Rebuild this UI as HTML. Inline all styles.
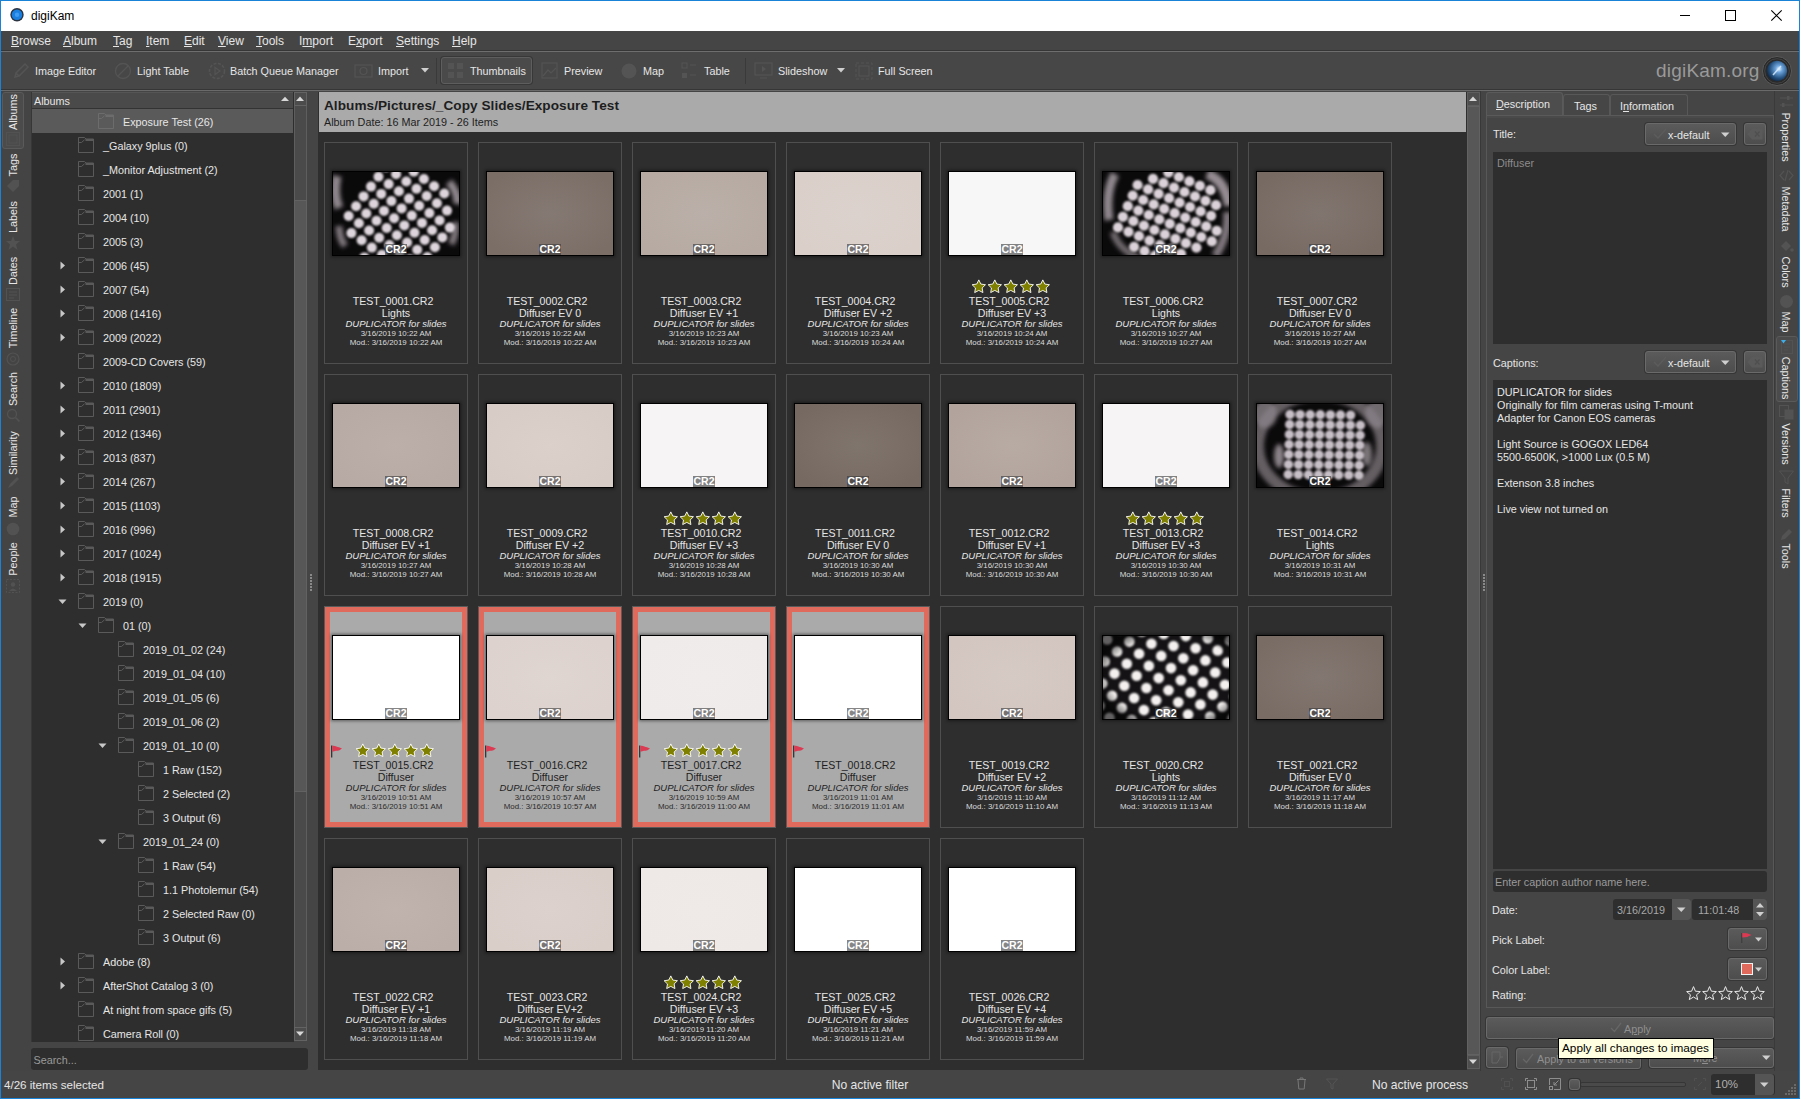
<!DOCTYPE html><html><head><meta charset="utf-8"><style>
html,body{margin:0;padding:0;}
body{width:1800px;height:1099px;overflow:hidden;position:relative;background:#454545;font-family:"Liberation Sans",sans-serif;}
div{position:absolute;box-sizing:border-box;}
.t{white-space:pre;}
.u{text-decoration:underline;text-underline-offset:1px;}
svg{position:absolute;overflow:visible;}
</style></head><body>
<div style="left:0px;top:0px;width:1800px;height:31px;background:#ffffff;"></div>
<svg style="left:9px;top:6px" width="18" height="18"><circle cx="8" cy="8.7" r="6.7" fill="#2a3340"/><circle cx="8" cy="8.7" r="5.3" fill="#1b7fe0"/><circle cx="8" cy="8.7" r="2.2" fill="#3f9cf2"/></svg>
<div class="t" style="left:31px;top:8px;font-size:12px;line-height:16px;color:#000000;font-weight:400;font-style:normal;">digiKam</div>
<div style="left:1680px;top:15px;width:10px;height:1px;background:#000;"></div>
<div style="left:1725px;top:10px;width:11px;height:11px;border:1px solid #000;"></div>
<svg style="left:1771px;top:10px" width="12" height="12"><path d="M0.3 0.3 L10.7 10.7 M10.7 0.3 L0.3 10.7" stroke="#000" stroke-width="1.1"/></svg>
<div style="left:0px;top:31px;width:1800px;height:19px;background:#454545;"></div>
<div style="left:0px;top:50px;width:1800px;height:1px;background:#363636;"></div>
<div style="left:0px;top:51px;width:1800px;height:1px;background:#6e6e6e;"></div>
<div class="t" style="left:11px;top:33px;font-size:12px;line-height:16px;color:#e6e6e6;font-weight:400;font-style:normal;"><span class="u">B</span>rowse</div>
<div class="t" style="left:63px;top:33px;font-size:12px;line-height:16px;color:#e6e6e6;font-weight:400;font-style:normal;"><span class="u">A</span>lbum</div>
<div class="t" style="left:113px;top:33px;font-size:12px;line-height:16px;color:#e6e6e6;font-weight:400;font-style:normal;"><span class="u">T</span>ag</div>
<div class="t" style="left:146px;top:33px;font-size:12px;line-height:16px;color:#e6e6e6;font-weight:400;font-style:normal;"><span class="u">I</span>tem</div>
<div class="t" style="left:184px;top:33px;font-size:12px;line-height:16px;color:#e6e6e6;font-weight:400;font-style:normal;"><span class="u">E</span>dit</div>
<div class="t" style="left:218px;top:33px;font-size:12px;line-height:16px;color:#e6e6e6;font-weight:400;font-style:normal;"><span class="u">V</span>iew</div>
<div class="t" style="left:256px;top:33px;font-size:12px;line-height:16px;color:#e6e6e6;font-weight:400;font-style:normal;"><span class="u">T</span>ools</div>
<div class="t" style="left:299px;top:33px;font-size:12px;line-height:16px;color:#e6e6e6;font-weight:400;font-style:normal;">I<span class="u">m</span>port</div>
<div class="t" style="left:348px;top:33px;font-size:12px;line-height:16px;color:#e6e6e6;font-weight:400;font-style:normal;">E<span class="u">x</span>port</div>
<div class="t" style="left:396px;top:33px;font-size:12px;line-height:16px;color:#e6e6e6;font-weight:400;font-style:normal;"><span class="u">S</span>ettings</div>
<div class="t" style="left:452px;top:33px;font-size:12px;line-height:16px;color:#e6e6e6;font-weight:400;font-style:normal;"><span class="u">H</span>elp</div>
<div style="left:0px;top:52px;width:1800px;height:37px;background:#474747;"></div>
<div style="left:0px;top:89px;width:1800px;height:1px;background:#363636;"></div>
<div style="left:0px;top:90px;width:1800px;height:1px;background:#6a6a6a;"></div>
<div style="left:0px;top:91px;width:1800px;height:1007px;background:#454545;"></div>
<svg style="left:12px;top:62px" width="18" height="18"><path d="M3 15 L4 11 L13 2 L16 5 L7 14 Z M4 11 L7 14" fill="none" stroke="#545454" stroke-width="1.5"/></svg>
<div class="t" style="left:35px;top:63px;font-size:10.8px;line-height:16px;color:#e6e6e6;font-weight:400;font-style:normal;">Image Editor</div>
<svg style="left:114px;top:62px" width="18" height="18"><circle cx="9" cy="9" r="7.5" fill="none" stroke="#545454" stroke-width="1.3"/><path d="M4 14 L14 4" stroke="#545454" stroke-width="1.3"/></svg>
<div class="t" style="left:137px;top:63px;font-size:10.8px;line-height:16px;color:#e6e6e6;font-weight:400;font-style:normal;">Light Table</div>
<svg style="left:207px;top:61px" width="20" height="20"><circle cx="10" cy="10" r="7.5" fill="none" stroke="#545454" stroke-width="1.6" stroke-dasharray="3 1.5"/><path d="M8 6.5 L13 10 L8 13.5 Z" fill="none" stroke="#545454" stroke-width="1.2"/></svg>
<div class="t" style="left:230px;top:63px;font-size:10.8px;line-height:16px;color:#e6e6e6;font-weight:400;font-style:normal;">Batch Queue Manager</div>
<svg style="left:354px;top:63px" width="20" height="16"><rect x="1" y="2" width="17" height="12" fill="none" stroke="#545454" stroke-width="1.2"/><circle cx="9.5" cy="8" r="3.5" fill="none" stroke="#545454" stroke-width="1.2"/></svg>
<div class="t" style="left:378px;top:63px;font-size:10.8px;line-height:16px;color:#e6e6e6;font-weight:400;font-style:normal;">Import</div>
<svg style="left:421px;top:68px" width="9" height="6"><path d="M0 0 L8 0 L4 4.5 Z" fill="#cfcfcf"/></svg>
<div style="left:436px;top:58px;width:1px;height:26px;background:#3a3a3a;"></div>
<div style="left:441px;top:57px;width:91px;height:27px;background:#4a4a4a;border:1px solid #5e5e5e;border-radius:3px;box-shadow:0 0 0 1px #383838;"></div>
<svg style="left:447px;top:62px" width="18" height="18"><rect x="1" y="1" width="6" height="6" fill="#545454"/><rect x="10" y="1" width="6" height="6" fill="#545454"/><rect x="1" y="10" width="6" height="6" fill="#545454"/><rect x="10" y="10" width="6" height="6" fill="#545454"/></svg>
<div class="t" style="left:470px;top:63px;font-size:10.8px;line-height:16px;color:#e6e6e6;font-weight:400;font-style:normal;">Thumbnails</div>
<svg style="left:541px;top:62px" width="18" height="18"><rect x="1" y="1" width="15" height="15" fill="none" stroke="#545454" stroke-width="1.2"/><path d="M2 14 L7 8 L10 11 L15 6" fill="none" stroke="#545454" stroke-width="1.2"/></svg>
<div class="t" style="left:564px;top:63px;font-size:10.8px;line-height:16px;color:#e6e6e6;font-weight:400;font-style:normal;">Preview</div>
<svg style="left:620px;top:62px" width="18" height="18"><circle cx="9" cy="9" r="7.5" fill="#545454"/></svg>
<div class="t" style="left:643px;top:63px;font-size:10.8px;line-height:16px;color:#e6e6e6;font-weight:400;font-style:normal;">Map</div>
<svg style="left:681px;top:62px" width="18" height="18"><rect x="1" y="1" width="5" height="5" fill="none" stroke="#545454"/><rect x="1" y="11" width="5" height="5" fill="#545454"/><path d="M9 3 H15 M9 13 H15" stroke="#545454" stroke-width="1.2"/></svg>
<div class="t" style="left:704px;top:63px;font-size:10.8px;line-height:16px;color:#e6e6e6;font-weight:400;font-style:normal;">Table</div>
<div style="left:745px;top:58px;width:1px;height:26px;background:#3a3a3a;"></div>
<svg style="left:754px;top:61px" width="20" height="20"><rect x="1" y="2" width="17" height="12" fill="none" stroke="#545454" stroke-width="1.2"/><path d="M8 5 L12 8 L8 11 Z" fill="#545454"/><path d="M6 17 H13" stroke="#545454"/></svg>
<div class="t" style="left:778px;top:63px;font-size:10.8px;line-height:16px;color:#e6e6e6;font-weight:400;font-style:normal;">Slideshow</div>
<svg style="left:837px;top:68px" width="9" height="6"><path d="M0 0 L8 0 L4 4.5 Z" fill="#cfcfcf"/></svg>
<svg style="left:855px;top:62px" width="18" height="18"><rect x="1" y="1" width="16" height="16" fill="none" stroke="#545454" stroke-dasharray="3 2"/><rect x="4" y="4" width="10" height="10" fill="none" stroke="#545454"/></svg>
<div class="t" style="left:878px;top:63px;font-size:10.8px;line-height:16px;color:#e6e6e6;font-weight:400;font-style:normal;">Full Screen</div>
<div class="t" style="left:1656px;top:59px;font-size:19px;line-height:24px;color:#9a9a9a;font-weight:400;font-style:normal;letter-spacing:0.2px;">digiKam.org</div>
<svg style="left:1761px;top:55px" width="32" height="32"><defs><radialGradient id="lg" cx="60%" cy="40%" r="65%"><stop offset="0" stop-color="#e8f4ff"/><stop offset="0.25" stop-color="#6fa5dc"/><stop offset="0.7" stop-color="#24507e"/><stop offset="1" stop-color="#10243c"/></radialGradient></defs><circle cx="16" cy="16" r="14.5" fill="#2a2a2a" stroke="#5a5a5a" stroke-width="1"/><circle cx="16" cy="16" r="12.3" fill="none" stroke="#4a4a4a" stroke-width="0.8"/><circle cx="16" cy="16" r="10.2" fill="url(#lg)"/><path d="M12 20 L20 11" stroke="#dfefff" stroke-width="1.5" opacity="0.8"/></svg>
<div style="left:1px;top:91px;width:30px;height:980px;background:#444444;"></div>
<div style="left:2px;top:92px;width:22px;height:57px;background:#4b4b4b;border:1px solid #5a5a5a;border-radius:3px;"></div>
<div class="t" style="left:-47px;top:103.5px;width:120px;height:16px;line-height:16px;text-align:center;font-size:10.8px;color:#e6e6e6;transform:rotate(-90deg);">Albums</div>
<div class="t" style="left:-47px;top:157px;width:120px;height:16px;line-height:16px;text-align:center;font-size:10.8px;color:#e6e6e6;transform:rotate(-90deg);">Tags</div>
<div class="t" style="left:-47px;top:208.5px;width:120px;height:16px;line-height:16px;text-align:center;font-size:10.8px;color:#e6e6e6;transform:rotate(-90deg);">Labels</div>
<div class="t" style="left:-47px;top:262.5px;width:120px;height:16px;line-height:16px;text-align:center;font-size:10.8px;color:#e6e6e6;transform:rotate(-90deg);">Dates</div>
<div class="t" style="left:-47px;top:320px;width:120px;height:16px;line-height:16px;text-align:center;font-size:10.8px;color:#e6e6e6;transform:rotate(-90deg);">Timeline</div>
<div class="t" style="left:-47px;top:380.5px;width:120px;height:16px;line-height:16px;text-align:center;font-size:10.8px;color:#e6e6e6;transform:rotate(-90deg);">Search</div>
<div class="t" style="left:-47px;top:444.5px;width:120px;height:16px;line-height:16px;text-align:center;font-size:10.8px;color:#e6e6e6;transform:rotate(-90deg);">Similarity</div>
<div class="t" style="left:-47px;top:499px;width:120px;height:16px;line-height:16px;text-align:center;font-size:10.8px;color:#e6e6e6;transform:rotate(-90deg);">Map</div>
<div class="t" style="left:-47px;top:551px;width:120px;height:16px;line-height:16px;text-align:center;font-size:10.8px;color:#e6e6e6;transform:rotate(-90deg);">People</div>
<svg style="left:6px;top:132px" width="15" height="15"><rect x="0.5" y="0.5" width="13" height="13" fill="none" stroke="#525252"/><rect x="3" y="3" width="8" height="8" fill="none" stroke="#525252"/></svg>
<svg style="left:6px;top:179px" width="15" height="15"><path d="M1 7 L7 1 H13 V7 L7 13 Z" fill="#525252"/></svg>
<svg style="left:5px;top:235px" width="16" height="16"><polygon points="8,1 10,6 15,6 11,9.5 12.5,15 8,11.5 3.5,15 5,9.5 1,6 6,6" fill="#525252"/></svg>
<svg style="left:6px;top:287px" width="15" height="15"><rect x="0.5" y="1.5" width="13" height="12" fill="none" stroke="#525252"/><path d="M3 5 H11 M3 8 H11 M3 11 H8" stroke="#525252"/></svg>
<svg style="left:6px;top:352px" width="15" height="15"><circle cx="7" cy="7" r="6" fill="none" stroke="#525252" stroke-width="1.2"/><circle cx="7" cy="7" r="2.5" fill="none" stroke="#525252"/></svg>
<svg style="left:6px;top:408px" width="15" height="15"><circle cx="6" cy="6" r="4.5" fill="none" stroke="#525252" stroke-width="1.3"/><path d="M9.5 9.5 L13.5 13.5" stroke="#525252" stroke-width="1.6"/></svg>
<svg style="left:6px;top:475px" width="15" height="15"><path d="M2 13 L4 9 L11 2 L13 4 L6 11 Z" fill="#525252"/></svg>
<svg style="left:6px;top:522px" width="15" height="15"><circle cx="7" cy="7" r="6.3" fill="#525252"/></svg>
<svg style="left:6px;top:579px" width="15" height="15"><rect x="0.5" y="0.5" width="13" height="13" fill="none" stroke="#525252" stroke-dasharray="2 1.5"/><circle cx="7" cy="5.5" r="2.2" fill="#525252"/><path d="M3 12 Q7 7 11 12 Z" fill="#525252"/></svg>
<div style="left:31px;top:92px;width:263px;height:950px;background:#2e2e2e;border-left:1px solid #373737;"></div>
<div style="left:32px;top:92px;width:261px;height:16px;background:#4a4a4a;border-top:1px solid #555;"></div>
<div class="t" style="left:34px;top:93px;font-size:10.8px;line-height:16px;color:#e6e6e6;font-weight:400;font-style:normal;">Albums</div>
<svg style="left:281px;top:96px" width="10" height="6"><path d="M0 5 L8 5 L4 0.8 Z" fill="#d8d8d8"/></svg>
<div style="left:32px;top:108px;width:261px;height:1px;background:#333;"></div>
<div style="left:32px;top:109px;width:261px;height:24px;background:#5a5a5a;"></div>
<svg style="left:98px;top:113px" width="17" height="17"><path d="M0.5 15.5 V0.5 H6.5 L8 2 H15.5 V15.5 Z" fill="none" stroke="#6c6c6c" stroke-width="1"/><rect x="7.5" y="2" width="8.5" height="2" fill="#6c6c6c"/><path d="M0.5 5.5 H3.5 L6.5 2.8" fill="none" stroke="#6c6c6c" stroke-width="1"/></svg>
<div class="t" style="left:123px;top:113.5px;font-size:10.8px;line-height:17px;color:#e6e6e6;font-weight:400;font-style:normal;">Exposure Test (26)</div>
<svg style="left:78px;top:137px" width="17" height="17"><path d="M0.5 15.5 V0.5 H6.5 L8 2 H15.5 V15.5 Z" fill="none" stroke="#5a5a5a" stroke-width="1"/><rect x="7.5" y="2" width="8.5" height="2" fill="#5a5a5a"/><path d="M0.5 5.5 H3.5 L6.5 2.8" fill="none" stroke="#5a5a5a" stroke-width="1"/></svg>
<div class="t" style="left:103px;top:137.5px;font-size:10.8px;line-height:17px;color:#e6e6e6;font-weight:400;font-style:normal;">_Galaxy 9plus (0)</div>
<svg style="left:78px;top:161px" width="17" height="17"><path d="M0.5 15.5 V0.5 H6.5 L8 2 H15.5 V15.5 Z" fill="none" stroke="#5a5a5a" stroke-width="1"/><rect x="7.5" y="2" width="8.5" height="2" fill="#5a5a5a"/><path d="M0.5 5.5 H3.5 L6.5 2.8" fill="none" stroke="#5a5a5a" stroke-width="1"/></svg>
<div class="t" style="left:103px;top:161.5px;font-size:10.8px;line-height:17px;color:#e6e6e6;font-weight:400;font-style:normal;">_Monitor Adjustment (2)</div>
<svg style="left:78px;top:185px" width="17" height="17"><path d="M0.5 15.5 V0.5 H6.5 L8 2 H15.5 V15.5 Z" fill="none" stroke="#5a5a5a" stroke-width="1"/><rect x="7.5" y="2" width="8.5" height="2" fill="#5a5a5a"/><path d="M0.5 5.5 H3.5 L6.5 2.8" fill="none" stroke="#5a5a5a" stroke-width="1"/></svg>
<div class="t" style="left:103px;top:185.5px;font-size:10.8px;line-height:17px;color:#e6e6e6;font-weight:400;font-style:normal;">2001 (1)</div>
<svg style="left:78px;top:209px" width="17" height="17"><path d="M0.5 15.5 V0.5 H6.5 L8 2 H15.5 V15.5 Z" fill="none" stroke="#5a5a5a" stroke-width="1"/><rect x="7.5" y="2" width="8.5" height="2" fill="#5a5a5a"/><path d="M0.5 5.5 H3.5 L6.5 2.8" fill="none" stroke="#5a5a5a" stroke-width="1"/></svg>
<div class="t" style="left:103px;top:209.5px;font-size:10.8px;line-height:17px;color:#e6e6e6;font-weight:400;font-style:normal;">2004 (10)</div>
<svg style="left:78px;top:233px" width="17" height="17"><path d="M0.5 15.5 V0.5 H6.5 L8 2 H15.5 V15.5 Z" fill="none" stroke="#5a5a5a" stroke-width="1"/><rect x="7.5" y="2" width="8.5" height="2" fill="#5a5a5a"/><path d="M0.5 5.5 H3.5 L6.5 2.8" fill="none" stroke="#5a5a5a" stroke-width="1"/></svg>
<div class="t" style="left:103px;top:233.5px;font-size:10.8px;line-height:17px;color:#e6e6e6;font-weight:400;font-style:normal;">2005 (3)</div>
<svg style="left:78px;top:257px" width="17" height="17"><path d="M0.5 15.5 V0.5 H6.5 L8 2 H15.5 V15.5 Z" fill="none" stroke="#5a5a5a" stroke-width="1"/><rect x="7.5" y="2" width="8.5" height="2" fill="#5a5a5a"/><path d="M0.5 5.5 H3.5 L6.5 2.8" fill="none" stroke="#5a5a5a" stroke-width="1"/></svg>
<svg style="left:60px;top:261px" width="6" height="9"><path d="M0.5 0.5 L5 4.5 L0.5 8.5 Z" fill="#c8c8c8"/></svg>
<div class="t" style="left:103px;top:257.5px;font-size:10.8px;line-height:17px;color:#e6e6e6;font-weight:400;font-style:normal;">2006 (45)</div>
<svg style="left:78px;top:281px" width="17" height="17"><path d="M0.5 15.5 V0.5 H6.5 L8 2 H15.5 V15.5 Z" fill="none" stroke="#5a5a5a" stroke-width="1"/><rect x="7.5" y="2" width="8.5" height="2" fill="#5a5a5a"/><path d="M0.5 5.5 H3.5 L6.5 2.8" fill="none" stroke="#5a5a5a" stroke-width="1"/></svg>
<svg style="left:60px;top:285px" width="6" height="9"><path d="M0.5 0.5 L5 4.5 L0.5 8.5 Z" fill="#c8c8c8"/></svg>
<div class="t" style="left:103px;top:281.5px;font-size:10.8px;line-height:17px;color:#e6e6e6;font-weight:400;font-style:normal;">2007 (54)</div>
<svg style="left:78px;top:305px" width="17" height="17"><path d="M0.5 15.5 V0.5 H6.5 L8 2 H15.5 V15.5 Z" fill="none" stroke="#5a5a5a" stroke-width="1"/><rect x="7.5" y="2" width="8.5" height="2" fill="#5a5a5a"/><path d="M0.5 5.5 H3.5 L6.5 2.8" fill="none" stroke="#5a5a5a" stroke-width="1"/></svg>
<svg style="left:60px;top:309px" width="6" height="9"><path d="M0.5 0.5 L5 4.5 L0.5 8.5 Z" fill="#c8c8c8"/></svg>
<div class="t" style="left:103px;top:305.5px;font-size:10.8px;line-height:17px;color:#e6e6e6;font-weight:400;font-style:normal;">2008 (1416)</div>
<svg style="left:78px;top:329px" width="17" height="17"><path d="M0.5 15.5 V0.5 H6.5 L8 2 H15.5 V15.5 Z" fill="none" stroke="#5a5a5a" stroke-width="1"/><rect x="7.5" y="2" width="8.5" height="2" fill="#5a5a5a"/><path d="M0.5 5.5 H3.5 L6.5 2.8" fill="none" stroke="#5a5a5a" stroke-width="1"/></svg>
<svg style="left:60px;top:333px" width="6" height="9"><path d="M0.5 0.5 L5 4.5 L0.5 8.5 Z" fill="#c8c8c8"/></svg>
<div class="t" style="left:103px;top:329.5px;font-size:10.8px;line-height:17px;color:#e6e6e6;font-weight:400;font-style:normal;">2009 (2022)</div>
<svg style="left:78px;top:353px" width="17" height="17"><path d="M0.5 15.5 V0.5 H6.5 L8 2 H15.5 V15.5 Z" fill="none" stroke="#5a5a5a" stroke-width="1"/><rect x="7.5" y="2" width="8.5" height="2" fill="#5a5a5a"/><path d="M0.5 5.5 H3.5 L6.5 2.8" fill="none" stroke="#5a5a5a" stroke-width="1"/></svg>
<div class="t" style="left:103px;top:353.5px;font-size:10.8px;line-height:17px;color:#e6e6e6;font-weight:400;font-style:normal;">2009-CD Covers (59)</div>
<svg style="left:78px;top:377px" width="17" height="17"><path d="M0.5 15.5 V0.5 H6.5 L8 2 H15.5 V15.5 Z" fill="none" stroke="#5a5a5a" stroke-width="1"/><rect x="7.5" y="2" width="8.5" height="2" fill="#5a5a5a"/><path d="M0.5 5.5 H3.5 L6.5 2.8" fill="none" stroke="#5a5a5a" stroke-width="1"/></svg>
<svg style="left:60px;top:381px" width="6" height="9"><path d="M0.5 0.5 L5 4.5 L0.5 8.5 Z" fill="#c8c8c8"/></svg>
<div class="t" style="left:103px;top:377.5px;font-size:10.8px;line-height:17px;color:#e6e6e6;font-weight:400;font-style:normal;">2010 (1809)</div>
<svg style="left:78px;top:401px" width="17" height="17"><path d="M0.5 15.5 V0.5 H6.5 L8 2 H15.5 V15.5 Z" fill="none" stroke="#5a5a5a" stroke-width="1"/><rect x="7.5" y="2" width="8.5" height="2" fill="#5a5a5a"/><path d="M0.5 5.5 H3.5 L6.5 2.8" fill="none" stroke="#5a5a5a" stroke-width="1"/></svg>
<svg style="left:60px;top:405px" width="6" height="9"><path d="M0.5 0.5 L5 4.5 L0.5 8.5 Z" fill="#c8c8c8"/></svg>
<div class="t" style="left:103px;top:401.5px;font-size:10.8px;line-height:17px;color:#e6e6e6;font-weight:400;font-style:normal;">2011 (2901)</div>
<svg style="left:78px;top:425px" width="17" height="17"><path d="M0.5 15.5 V0.5 H6.5 L8 2 H15.5 V15.5 Z" fill="none" stroke="#5a5a5a" stroke-width="1"/><rect x="7.5" y="2" width="8.5" height="2" fill="#5a5a5a"/><path d="M0.5 5.5 H3.5 L6.5 2.8" fill="none" stroke="#5a5a5a" stroke-width="1"/></svg>
<svg style="left:60px;top:429px" width="6" height="9"><path d="M0.5 0.5 L5 4.5 L0.5 8.5 Z" fill="#c8c8c8"/></svg>
<div class="t" style="left:103px;top:425.5px;font-size:10.8px;line-height:17px;color:#e6e6e6;font-weight:400;font-style:normal;">2012 (1346)</div>
<svg style="left:78px;top:449px" width="17" height="17"><path d="M0.5 15.5 V0.5 H6.5 L8 2 H15.5 V15.5 Z" fill="none" stroke="#5a5a5a" stroke-width="1"/><rect x="7.5" y="2" width="8.5" height="2" fill="#5a5a5a"/><path d="M0.5 5.5 H3.5 L6.5 2.8" fill="none" stroke="#5a5a5a" stroke-width="1"/></svg>
<svg style="left:60px;top:453px" width="6" height="9"><path d="M0.5 0.5 L5 4.5 L0.5 8.5 Z" fill="#c8c8c8"/></svg>
<div class="t" style="left:103px;top:449.5px;font-size:10.8px;line-height:17px;color:#e6e6e6;font-weight:400;font-style:normal;">2013 (837)</div>
<svg style="left:78px;top:473px" width="17" height="17"><path d="M0.5 15.5 V0.5 H6.5 L8 2 H15.5 V15.5 Z" fill="none" stroke="#5a5a5a" stroke-width="1"/><rect x="7.5" y="2" width="8.5" height="2" fill="#5a5a5a"/><path d="M0.5 5.5 H3.5 L6.5 2.8" fill="none" stroke="#5a5a5a" stroke-width="1"/></svg>
<svg style="left:60px;top:477px" width="6" height="9"><path d="M0.5 0.5 L5 4.5 L0.5 8.5 Z" fill="#c8c8c8"/></svg>
<div class="t" style="left:103px;top:473.5px;font-size:10.8px;line-height:17px;color:#e6e6e6;font-weight:400;font-style:normal;">2014 (267)</div>
<svg style="left:78px;top:497px" width="17" height="17"><path d="M0.5 15.5 V0.5 H6.5 L8 2 H15.5 V15.5 Z" fill="none" stroke="#5a5a5a" stroke-width="1"/><rect x="7.5" y="2" width="8.5" height="2" fill="#5a5a5a"/><path d="M0.5 5.5 H3.5 L6.5 2.8" fill="none" stroke="#5a5a5a" stroke-width="1"/></svg>
<svg style="left:60px;top:501px" width="6" height="9"><path d="M0.5 0.5 L5 4.5 L0.5 8.5 Z" fill="#c8c8c8"/></svg>
<div class="t" style="left:103px;top:497.5px;font-size:10.8px;line-height:17px;color:#e6e6e6;font-weight:400;font-style:normal;">2015 (1103)</div>
<svg style="left:78px;top:521px" width="17" height="17"><path d="M0.5 15.5 V0.5 H6.5 L8 2 H15.5 V15.5 Z" fill="none" stroke="#5a5a5a" stroke-width="1"/><rect x="7.5" y="2" width="8.5" height="2" fill="#5a5a5a"/><path d="M0.5 5.5 H3.5 L6.5 2.8" fill="none" stroke="#5a5a5a" stroke-width="1"/></svg>
<svg style="left:60px;top:525px" width="6" height="9"><path d="M0.5 0.5 L5 4.5 L0.5 8.5 Z" fill="#c8c8c8"/></svg>
<div class="t" style="left:103px;top:521.5px;font-size:10.8px;line-height:17px;color:#e6e6e6;font-weight:400;font-style:normal;">2016 (996)</div>
<svg style="left:78px;top:545px" width="17" height="17"><path d="M0.5 15.5 V0.5 H6.5 L8 2 H15.5 V15.5 Z" fill="none" stroke="#5a5a5a" stroke-width="1"/><rect x="7.5" y="2" width="8.5" height="2" fill="#5a5a5a"/><path d="M0.5 5.5 H3.5 L6.5 2.8" fill="none" stroke="#5a5a5a" stroke-width="1"/></svg>
<svg style="left:60px;top:549px" width="6" height="9"><path d="M0.5 0.5 L5 4.5 L0.5 8.5 Z" fill="#c8c8c8"/></svg>
<div class="t" style="left:103px;top:545.5px;font-size:10.8px;line-height:17px;color:#e6e6e6;font-weight:400;font-style:normal;">2017 (1024)</div>
<svg style="left:78px;top:569px" width="17" height="17"><path d="M0.5 15.5 V0.5 H6.5 L8 2 H15.5 V15.5 Z" fill="none" stroke="#5a5a5a" stroke-width="1"/><rect x="7.5" y="2" width="8.5" height="2" fill="#5a5a5a"/><path d="M0.5 5.5 H3.5 L6.5 2.8" fill="none" stroke="#5a5a5a" stroke-width="1"/></svg>
<svg style="left:60px;top:573px" width="6" height="9"><path d="M0.5 0.5 L5 4.5 L0.5 8.5 Z" fill="#c8c8c8"/></svg>
<div class="t" style="left:103px;top:569.5px;font-size:10.8px;line-height:17px;color:#e6e6e6;font-weight:400;font-style:normal;">2018 (1915)</div>
<svg style="left:78px;top:593px" width="17" height="17"><path d="M0.5 15.5 V0.5 H6.5 L8 2 H15.5 V15.5 Z" fill="none" stroke="#5a5a5a" stroke-width="1"/><rect x="7.5" y="2" width="8.5" height="2" fill="#5a5a5a"/><path d="M0.5 5.5 H3.5 L6.5 2.8" fill="none" stroke="#5a5a5a" stroke-width="1"/></svg>
<svg style="left:58px;top:599px" width="9" height="6"><path d="M0.5 0.5 L8.5 0.5 L4.5 5 Z" fill="#c8c8c8"/></svg>
<div class="t" style="left:103px;top:593.5px;font-size:10.8px;line-height:17px;color:#e6e6e6;font-weight:400;font-style:normal;">2019 (0)</div>
<svg style="left:98px;top:617px" width="17" height="17"><path d="M0.5 15.5 V0.5 H6.5 L8 2 H15.5 V15.5 Z" fill="none" stroke="#5a5a5a" stroke-width="1"/><rect x="7.5" y="2" width="8.5" height="2" fill="#5a5a5a"/><path d="M0.5 5.5 H3.5 L6.5 2.8" fill="none" stroke="#5a5a5a" stroke-width="1"/></svg>
<svg style="left:78px;top:623px" width="9" height="6"><path d="M0.5 0.5 L8.5 0.5 L4.5 5 Z" fill="#c8c8c8"/></svg>
<div class="t" style="left:123px;top:617.5px;font-size:10.8px;line-height:17px;color:#e6e6e6;font-weight:400;font-style:normal;">01 (0)</div>
<svg style="left:118px;top:641px" width="17" height="17"><path d="M0.5 15.5 V0.5 H6.5 L8 2 H15.5 V15.5 Z" fill="none" stroke="#5a5a5a" stroke-width="1"/><rect x="7.5" y="2" width="8.5" height="2" fill="#5a5a5a"/><path d="M0.5 5.5 H3.5 L6.5 2.8" fill="none" stroke="#5a5a5a" stroke-width="1"/></svg>
<div class="t" style="left:143px;top:641.5px;font-size:10.8px;line-height:17px;color:#e6e6e6;font-weight:400;font-style:normal;">2019_01_02 (24)</div>
<svg style="left:118px;top:665px" width="17" height="17"><path d="M0.5 15.5 V0.5 H6.5 L8 2 H15.5 V15.5 Z" fill="none" stroke="#5a5a5a" stroke-width="1"/><rect x="7.5" y="2" width="8.5" height="2" fill="#5a5a5a"/><path d="M0.5 5.5 H3.5 L6.5 2.8" fill="none" stroke="#5a5a5a" stroke-width="1"/></svg>
<div class="t" style="left:143px;top:665.5px;font-size:10.8px;line-height:17px;color:#e6e6e6;font-weight:400;font-style:normal;">2019_01_04 (10)</div>
<svg style="left:118px;top:689px" width="17" height="17"><path d="M0.5 15.5 V0.5 H6.5 L8 2 H15.5 V15.5 Z" fill="none" stroke="#5a5a5a" stroke-width="1"/><rect x="7.5" y="2" width="8.5" height="2" fill="#5a5a5a"/><path d="M0.5 5.5 H3.5 L6.5 2.8" fill="none" stroke="#5a5a5a" stroke-width="1"/></svg>
<div class="t" style="left:143px;top:689.5px;font-size:10.8px;line-height:17px;color:#e6e6e6;font-weight:400;font-style:normal;">2019_01_05 (6)</div>
<svg style="left:118px;top:713px" width="17" height="17"><path d="M0.5 15.5 V0.5 H6.5 L8 2 H15.5 V15.5 Z" fill="none" stroke="#5a5a5a" stroke-width="1"/><rect x="7.5" y="2" width="8.5" height="2" fill="#5a5a5a"/><path d="M0.5 5.5 H3.5 L6.5 2.8" fill="none" stroke="#5a5a5a" stroke-width="1"/></svg>
<div class="t" style="left:143px;top:713.5px;font-size:10.8px;line-height:17px;color:#e6e6e6;font-weight:400;font-style:normal;">2019_01_06 (2)</div>
<svg style="left:118px;top:737px" width="17" height="17"><path d="M0.5 15.5 V0.5 H6.5 L8 2 H15.5 V15.5 Z" fill="none" stroke="#5a5a5a" stroke-width="1"/><rect x="7.5" y="2" width="8.5" height="2" fill="#5a5a5a"/><path d="M0.5 5.5 H3.5 L6.5 2.8" fill="none" stroke="#5a5a5a" stroke-width="1"/></svg>
<svg style="left:98px;top:743px" width="9" height="6"><path d="M0.5 0.5 L8.5 0.5 L4.5 5 Z" fill="#c8c8c8"/></svg>
<div class="t" style="left:143px;top:737.5px;font-size:10.8px;line-height:17px;color:#e6e6e6;font-weight:400;font-style:normal;">2019_01_10 (0)</div>
<svg style="left:138px;top:761px" width="17" height="17"><path d="M0.5 15.5 V0.5 H6.5 L8 2 H15.5 V15.5 Z" fill="none" stroke="#5a5a5a" stroke-width="1"/><rect x="7.5" y="2" width="8.5" height="2" fill="#5a5a5a"/><path d="M0.5 5.5 H3.5 L6.5 2.8" fill="none" stroke="#5a5a5a" stroke-width="1"/></svg>
<div class="t" style="left:163px;top:761.5px;font-size:10.8px;line-height:17px;color:#e6e6e6;font-weight:400;font-style:normal;">1 Raw (152)</div>
<svg style="left:138px;top:785px" width="17" height="17"><path d="M0.5 15.5 V0.5 H6.5 L8 2 H15.5 V15.5 Z" fill="none" stroke="#5a5a5a" stroke-width="1"/><rect x="7.5" y="2" width="8.5" height="2" fill="#5a5a5a"/><path d="M0.5 5.5 H3.5 L6.5 2.8" fill="none" stroke="#5a5a5a" stroke-width="1"/></svg>
<div class="t" style="left:163px;top:785.5px;font-size:10.8px;line-height:17px;color:#e6e6e6;font-weight:400;font-style:normal;">2 Selected (2)</div>
<svg style="left:138px;top:809px" width="17" height="17"><path d="M0.5 15.5 V0.5 H6.5 L8 2 H15.5 V15.5 Z" fill="none" stroke="#5a5a5a" stroke-width="1"/><rect x="7.5" y="2" width="8.5" height="2" fill="#5a5a5a"/><path d="M0.5 5.5 H3.5 L6.5 2.8" fill="none" stroke="#5a5a5a" stroke-width="1"/></svg>
<div class="t" style="left:163px;top:809.5px;font-size:10.8px;line-height:17px;color:#e6e6e6;font-weight:400;font-style:normal;">3 Output (6)</div>
<svg style="left:118px;top:833px" width="17" height="17"><path d="M0.5 15.5 V0.5 H6.5 L8 2 H15.5 V15.5 Z" fill="none" stroke="#5a5a5a" stroke-width="1"/><rect x="7.5" y="2" width="8.5" height="2" fill="#5a5a5a"/><path d="M0.5 5.5 H3.5 L6.5 2.8" fill="none" stroke="#5a5a5a" stroke-width="1"/></svg>
<svg style="left:98px;top:839px" width="9" height="6"><path d="M0.5 0.5 L8.5 0.5 L4.5 5 Z" fill="#c8c8c8"/></svg>
<div class="t" style="left:143px;top:833.5px;font-size:10.8px;line-height:17px;color:#e6e6e6;font-weight:400;font-style:normal;">2019_01_24 (0)</div>
<svg style="left:138px;top:857px" width="17" height="17"><path d="M0.5 15.5 V0.5 H6.5 L8 2 H15.5 V15.5 Z" fill="none" stroke="#5a5a5a" stroke-width="1"/><rect x="7.5" y="2" width="8.5" height="2" fill="#5a5a5a"/><path d="M0.5 5.5 H3.5 L6.5 2.8" fill="none" stroke="#5a5a5a" stroke-width="1"/></svg>
<div class="t" style="left:163px;top:857.5px;font-size:10.8px;line-height:17px;color:#e6e6e6;font-weight:400;font-style:normal;">1 Raw (54)</div>
<svg style="left:138px;top:881px" width="17" height="17"><path d="M0.5 15.5 V0.5 H6.5 L8 2 H15.5 V15.5 Z" fill="none" stroke="#5a5a5a" stroke-width="1"/><rect x="7.5" y="2" width="8.5" height="2" fill="#5a5a5a"/><path d="M0.5 5.5 H3.5 L6.5 2.8" fill="none" stroke="#5a5a5a" stroke-width="1"/></svg>
<div class="t" style="left:163px;top:881.5px;font-size:10.8px;line-height:17px;color:#e6e6e6;font-weight:400;font-style:normal;">1.1 Photolemur (54)</div>
<svg style="left:138px;top:905px" width="17" height="17"><path d="M0.5 15.5 V0.5 H6.5 L8 2 H15.5 V15.5 Z" fill="none" stroke="#5a5a5a" stroke-width="1"/><rect x="7.5" y="2" width="8.5" height="2" fill="#5a5a5a"/><path d="M0.5 5.5 H3.5 L6.5 2.8" fill="none" stroke="#5a5a5a" stroke-width="1"/></svg>
<div class="t" style="left:163px;top:905.5px;font-size:10.8px;line-height:17px;color:#e6e6e6;font-weight:400;font-style:normal;">2 Selected Raw (0)</div>
<svg style="left:138px;top:929px" width="17" height="17"><path d="M0.5 15.5 V0.5 H6.5 L8 2 H15.5 V15.5 Z" fill="none" stroke="#5a5a5a" stroke-width="1"/><rect x="7.5" y="2" width="8.5" height="2" fill="#5a5a5a"/><path d="M0.5 5.5 H3.5 L6.5 2.8" fill="none" stroke="#5a5a5a" stroke-width="1"/></svg>
<div class="t" style="left:163px;top:929.5px;font-size:10.8px;line-height:17px;color:#e6e6e6;font-weight:400;font-style:normal;">3 Output (6)</div>
<svg style="left:78px;top:953px" width="17" height="17"><path d="M0.5 15.5 V0.5 H6.5 L8 2 H15.5 V15.5 Z" fill="none" stroke="#5a5a5a" stroke-width="1"/><rect x="7.5" y="2" width="8.5" height="2" fill="#5a5a5a"/><path d="M0.5 5.5 H3.5 L6.5 2.8" fill="none" stroke="#5a5a5a" stroke-width="1"/></svg>
<svg style="left:60px;top:957px" width="6" height="9"><path d="M0.5 0.5 L5 4.5 L0.5 8.5 Z" fill="#c8c8c8"/></svg>
<div class="t" style="left:103px;top:953.5px;font-size:10.8px;line-height:17px;color:#e6e6e6;font-weight:400;font-style:normal;">Adobe (8)</div>
<svg style="left:78px;top:977px" width="17" height="17"><path d="M0.5 15.5 V0.5 H6.5 L8 2 H15.5 V15.5 Z" fill="none" stroke="#5a5a5a" stroke-width="1"/><rect x="7.5" y="2" width="8.5" height="2" fill="#5a5a5a"/><path d="M0.5 5.5 H3.5 L6.5 2.8" fill="none" stroke="#5a5a5a" stroke-width="1"/></svg>
<svg style="left:60px;top:981px" width="6" height="9"><path d="M0.5 0.5 L5 4.5 L0.5 8.5 Z" fill="#c8c8c8"/></svg>
<div class="t" style="left:103px;top:977.5px;font-size:10.8px;line-height:17px;color:#e6e6e6;font-weight:400;font-style:normal;">AfterShot Catalog 3 (0)</div>
<svg style="left:78px;top:1001px" width="17" height="17"><path d="M0.5 15.5 V0.5 H6.5 L8 2 H15.5 V15.5 Z" fill="none" stroke="#5a5a5a" stroke-width="1"/><rect x="7.5" y="2" width="8.5" height="2" fill="#5a5a5a"/><path d="M0.5 5.5 H3.5 L6.5 2.8" fill="none" stroke="#5a5a5a" stroke-width="1"/></svg>
<div class="t" style="left:103px;top:1001.5px;font-size:10.8px;line-height:17px;color:#e6e6e6;font-weight:400;font-style:normal;">At night from space gifs (5)</div>
<svg style="left:78px;top:1025px" width="17" height="17"><path d="M0.5 15.5 V0.5 H6.5 L8 2 H15.5 V15.5 Z" fill="none" stroke="#5a5a5a" stroke-width="1"/><rect x="7.5" y="2" width="8.5" height="2" fill="#5a5a5a"/><path d="M0.5 5.5 H3.5 L6.5 2.8" fill="none" stroke="#5a5a5a" stroke-width="1"/></svg>
<div class="t" style="left:103px;top:1025.5px;font-size:10.8px;line-height:17px;color:#e6e6e6;font-weight:400;font-style:normal;">Camera Roll (0)</div>
<div style="left:294px;top:92px;width:13px;height:949px;background:#4a4a4a;border-left:1px solid #5e5e5e;border-right:1px solid #5e5e5e;"></div>
<div style="left:294px;top:92px;width:13px;height:14px;background:#4c4c4c;border:1px solid #636363;"></div>
<svg style="left:296px;top:96px" width="9" height="6"><path d="M0 5 L8 5 L4 0.5 Z" fill="#d8d8d8"/></svg>
<div style="left:294px;top:200px;width:13px;height:592px;background:#575757;border:1px solid #626262;"></div>
<div style="left:294px;top:1027px;width:13px;height:14px;background:#4c4c4c;border:1px solid #636363;"></div>
<svg style="left:296px;top:1031px" width="9" height="6"><path d="M0 0.5 L8 0.5 L4 5 Z" fill="#d8d8d8"/></svg>
<div style="left:310px;top:574px;width:2px;height:2px;background:#8a8a8a;"></div>
<div style="left:310px;top:577px;width:2px;height:2px;background:#8a8a8a;"></div>
<div style="left:310px;top:580px;width:2px;height:2px;background:#8a8a8a;"></div>
<div style="left:310px;top:583px;width:2px;height:2px;background:#8a8a8a;"></div>
<div style="left:310px;top:586px;width:2px;height:2px;background:#8a8a8a;"></div>
<div style="left:310px;top:589px;width:2px;height:2px;background:#8a8a8a;"></div>
<div style="left:31px;top:1048px;width:277px;height:22px;background:#2e2e2e;border-radius:3px;"></div>
<div class="t" style="left:33.5px;top:1052px;font-size:10.8px;line-height:16px;color:#9a9a9a;font-weight:400;font-style:normal;">Search...</div>
<div class="t" style="left:4.00px;top:1078.68px;font-size:11.6px;line-height:11.6px;color:#e6e6e6;font-weight:400;font-style:normal;">4/26 items selected</div>
<div style="left:318px;top:92px;width:1149px;height:978px;background:#2e2e2e;"></div>
<div style="left:319px;top:92px;width:1147px;height:40px;background:#aaaaaa;"></div>
<div class="t" style="left:324.00px;top:99.29px;font-size:13.6px;line-height:13.6px;color:#1e1e1e;font-weight:700;font-style:normal;letter-spacing:0.05px;">Albums/Pictures/_Copy Slides/Exposure Test</div>
<div class="t" style="left:324.00px;top:116.86px;font-size:10.8px;line-height:10.8px;color:#1e1e1e;font-weight:400;font-style:normal;">Album Date: 16 Mar 2019 - 26 Items</div>
<div style="left:1467px;top:92px;width:13px;height:977px;background:#4a4a4a;"></div>
<div style="left:1467px;top:92px;width:13px;height:14px;background:#4e4e4e;border:1px solid #5e5e5e;"></div>
<svg style="left:1469px;top:96px" width="9" height="6"><path d="M0 5 L8 5 L4 0.5 Z" fill="#d8d8d8"/></svg>
<div style="left:1467px;top:106px;width:13px;height:949px;background:#575757;border:1px solid #626262;"></div>
<div style="left:1467px;top:1055px;width:13px;height:14px;background:#4e4e4e;border:1px solid #5e5e5e;"></div>
<svg style="left:1469px;top:1059px" width="9" height="6"><path d="M0 0.5 L8 0.5 L4 5 Z" fill="#d8d8d8"/></svg>
<div style="left:324px;top:142px;width:144px;height:222px;border:1px solid #4f4f4f;"></div>
<div style="left:332px;top:171px;width:128px;height:85px;background:#000;box-shadow:0 0 3px 1px rgba(0,0,0,0.45);overflow:hidden;"><svg width="126" height="83" style="left:1px;top:1px;overflow:hidden"><defs><filter id="f0001" x="-30%" y="-30%" width="160%" height="160%"><feGaussianBlur stdDeviation="1.3"/></filter><filter id="g0001" x="-30%" y="-30%" width="160%" height="160%"><feGaussianBlur stdDeviation="2.2"/></filter></defs><rect width="126" height="83" fill="#0b0a0b"/><g filter="url(#g0001)"><path d="M4 4 Q0 22 6 36" stroke="#8e868c" stroke-width="9" fill="none"/><path d="M6 54 Q6 66 12 74" stroke="#7e767c" stroke-width="7" fill="none"/><path d="M116 10 Q126 22 124 32" stroke="#8e868c" stroke-width="8" fill="none"/><path d="M122 50 Q124 62 118 72" stroke="#7e767c" stroke-width="7" fill="none"/></g><g filter="url(#f0001)" fill="#ddd5db"><circle cx="53.0" cy="-5.0" r="5.0"/><circle cx="45.5" cy="4.8" r="5.0"/><circle cx="38.0" cy="14.6" r="5.0"/><circle cx="30.6" cy="24.4" r="5.0"/><circle cx="23.1" cy="34.2" r="5.0"/><circle cx="15.7" cy="44.0" r="5.0"/><circle cx="70.6" cy="-7.5" r="5.0"/><circle cx="63.1" cy="2.3" r="5.0"/><circle cx="55.7" cy="12.1" r="5.0"/><circle cx="48.2" cy="21.9" r="5.0"/><circle cx="40.8" cy="31.7" r="5.0"/><circle cx="33.3" cy="41.5" r="5.0"/><circle cx="25.9" cy="51.3" r="5.0"/><circle cx="18.4" cy="61.1" r="5.0"/><circle cx="80.8" cy="-0.3" r="5.0"/><circle cx="73.3" cy="9.5" r="5.0"/><circle cx="65.9" cy="19.3" r="5.0"/><circle cx="58.4" cy="29.1" r="5.0"/><circle cx="51.0" cy="38.9" r="5.0"/><circle cx="43.5" cy="48.7" r="5.0"/><circle cx="36.1" cy="58.5" r="5.0"/><circle cx="28.6" cy="68.3" r="5.0"/><circle cx="90.9" cy="7.0" r="5.0"/><circle cx="83.5" cy="16.8" r="5.0"/><circle cx="76.0" cy="26.6" r="5.0"/><circle cx="68.6" cy="36.4" r="5.0"/><circle cx="61.1" cy="46.2" r="5.0"/><circle cx="53.7" cy="56.0" r="5.0"/><circle cx="46.2" cy="65.8" r="5.0"/><circle cx="38.8" cy="75.6" r="5.0"/><circle cx="31.3" cy="85.4" r="5.0"/><circle cx="101.1" cy="14.2" r="5.0"/><circle cx="93.7" cy="24.0" r="5.0"/><circle cx="86.2" cy="33.8" r="5.0"/><circle cx="78.8" cy="43.6" r="5.0"/><circle cx="71.3" cy="53.4" r="5.0"/><circle cx="63.9" cy="63.2" r="5.0"/><circle cx="56.4" cy="73.0" r="5.0"/><circle cx="49.0" cy="82.8" r="5.0"/><circle cx="111.3" cy="21.5" r="5.0"/><circle cx="103.9" cy="31.3" r="5.0"/><circle cx="96.4" cy="41.1" r="5.0"/><circle cx="89.0" cy="50.9" r="5.0"/><circle cx="81.5" cy="60.7" r="5.0"/><circle cx="74.1" cy="70.5" r="5.0"/><circle cx="66.6" cy="80.3" r="5.0"/><circle cx="59.2" cy="90.1" r="5.0"/><circle cx="114.0" cy="38.6" r="5.0"/><circle cx="106.6" cy="48.4" r="5.0"/><circle cx="99.1" cy="58.2" r="5.0"/><circle cx="91.7" cy="68.0" r="5.0"/><circle cx="84.2" cy="77.8" r="5.0"/><circle cx="76.8" cy="87.6" r="5.0"/><circle cx="116.8" cy="55.6" r="5.0"/><circle cx="109.3" cy="65.4" r="5.0"/><circle cx="101.9" cy="75.2" r="5.0"/><circle cx="94.4" cy="85.0" r="5.0"/></g></svg></div>
<div style="left:385px;top:244px;width:22px;height:11px;background:rgba(60,60,60,0.62);"></div>
<div class="t" style="left:385px;top:243px;width:22px;text-align:center;font-size:10.5px;line-height:13px;color:#fff;font-weight:700;">CR2</div>
<div class="t" style="left:293.00px;top:296.03px;width:200px;text-align:center;font-size:10.6px;line-height:10.6px;color:#e6e6e6;font-weight:400;font-style:normal;">TEST_0001.CR2</div>
<div class="t" style="left:296.00px;top:307.53px;width:200px;text-align:center;font-size:10.6px;line-height:10.6px;color:#e6e6e6;font-weight:400;font-style:normal;">Lights</div>
<div class="t" style="left:296.00px;top:319.26px;width:200px;text-align:center;font-size:9.5px;line-height:9.5px;color:#e6e6e6;font-weight:400;font-style:italic;">DUPLICATOR for slides</div>
<div class="t" style="left:296.00px;top:329.61px;width:200px;text-align:center;font-size:7.9px;line-height:7.9px;color:#dcdcdc;font-weight:400;font-style:normal;">3/16/2019 10:22 AM</div>
<div class="t" style="left:296.00px;top:338.61px;width:200px;text-align:center;font-size:7.9px;line-height:7.9px;color:#dcdcdc;font-weight:400;font-style:normal;">Mod.: 3/16/2019 10:22 AM</div>
<div style="left:478px;top:142px;width:144px;height:222px;border:1px solid #4f4f4f;"></div>
<div style="left:486px;top:171px;width:128px;height:85px;background:#000;box-shadow:0 0 3px 1px rgba(0,0,0,0.45);overflow:hidden;"><div style="left:1px;top:1px;width:126px;height:83px;background:radial-gradient(ellipse at 50% 50%, #857973 0%, #7b6e67 85%);"></div></div>
<div style="left:539px;top:244px;width:22px;height:11px;background:rgba(60,60,60,0.62);"></div>
<div class="t" style="left:539px;top:243px;width:22px;text-align:center;font-size:10.5px;line-height:13px;color:#fff;font-weight:700;">CR2</div>
<div class="t" style="left:447.00px;top:296.03px;width:200px;text-align:center;font-size:10.6px;line-height:10.6px;color:#e6e6e6;font-weight:400;font-style:normal;">TEST_0002.CR2</div>
<div class="t" style="left:450.00px;top:307.53px;width:200px;text-align:center;font-size:10.6px;line-height:10.6px;color:#e6e6e6;font-weight:400;font-style:normal;">Diffuser EV 0</div>
<div class="t" style="left:450.00px;top:319.26px;width:200px;text-align:center;font-size:9.5px;line-height:9.5px;color:#e6e6e6;font-weight:400;font-style:italic;">DUPLICATOR for slides</div>
<div class="t" style="left:450.00px;top:329.61px;width:200px;text-align:center;font-size:7.9px;line-height:7.9px;color:#dcdcdc;font-weight:400;font-style:normal;">3/16/2019 10:22 AM</div>
<div class="t" style="left:450.00px;top:338.61px;width:200px;text-align:center;font-size:7.9px;line-height:7.9px;color:#dcdcdc;font-weight:400;font-style:normal;">Mod.: 3/16/2019 10:22 AM</div>
<div style="left:632px;top:142px;width:144px;height:222px;border:1px solid #4f4f4f;"></div>
<div style="left:640px;top:171px;width:128px;height:85px;background:#000;box-shadow:0 0 3px 1px rgba(0,0,0,0.45);overflow:hidden;"><div style="left:1px;top:1px;width:126px;height:83px;background:radial-gradient(ellipse at 50% 50%, #bbb0a9 0%, #b6aaa2 85%);"></div></div>
<div style="left:693px;top:244px;width:22px;height:11px;background:rgba(60,60,60,0.62);"></div>
<div class="t" style="left:693px;top:243px;width:22px;text-align:center;font-size:10.5px;line-height:13px;color:#fff;font-weight:700;">CR2</div>
<div class="t" style="left:601.00px;top:296.03px;width:200px;text-align:center;font-size:10.6px;line-height:10.6px;color:#e6e6e6;font-weight:400;font-style:normal;">TEST_0003.CR2</div>
<div class="t" style="left:604.00px;top:307.53px;width:200px;text-align:center;font-size:10.6px;line-height:10.6px;color:#e6e6e6;font-weight:400;font-style:normal;">Diffuser EV +1</div>
<div class="t" style="left:604.00px;top:319.26px;width:200px;text-align:center;font-size:9.5px;line-height:9.5px;color:#e6e6e6;font-weight:400;font-style:italic;">DUPLICATOR for slides</div>
<div class="t" style="left:604.00px;top:329.61px;width:200px;text-align:center;font-size:7.9px;line-height:7.9px;color:#dcdcdc;font-weight:400;font-style:normal;">3/16/2019 10:23 AM</div>
<div class="t" style="left:604.00px;top:338.61px;width:200px;text-align:center;font-size:7.9px;line-height:7.9px;color:#dcdcdc;font-weight:400;font-style:normal;">Mod.: 3/16/2019 10:23 AM</div>
<div style="left:786px;top:142px;width:144px;height:222px;border:1px solid #4f4f4f;"></div>
<div style="left:794px;top:171px;width:128px;height:85px;background:#000;box-shadow:0 0 3px 1px rgba(0,0,0,0.45);overflow:hidden;"><div style="left:1px;top:1px;width:126px;height:83px;background:radial-gradient(ellipse at 50% 50%, #dcd2cd 0%, #dacfc9 85%);"></div></div>
<div style="left:847px;top:244px;width:22px;height:11px;background:rgba(60,60,60,0.62);"></div>
<div class="t" style="left:847px;top:243px;width:22px;text-align:center;font-size:10.5px;line-height:13px;color:#fff;font-weight:700;">CR2</div>
<div class="t" style="left:755.00px;top:296.03px;width:200px;text-align:center;font-size:10.6px;line-height:10.6px;color:#e6e6e6;font-weight:400;font-style:normal;">TEST_0004.CR2</div>
<div class="t" style="left:758.00px;top:307.53px;width:200px;text-align:center;font-size:10.6px;line-height:10.6px;color:#e6e6e6;font-weight:400;font-style:normal;">Diffuser EV +2</div>
<div class="t" style="left:758.00px;top:319.26px;width:200px;text-align:center;font-size:9.5px;line-height:9.5px;color:#e6e6e6;font-weight:400;font-style:italic;">DUPLICATOR for slides</div>
<div class="t" style="left:758.00px;top:329.61px;width:200px;text-align:center;font-size:7.9px;line-height:7.9px;color:#dcdcdc;font-weight:400;font-style:normal;">3/16/2019 10:23 AM</div>
<div class="t" style="left:758.00px;top:338.61px;width:200px;text-align:center;font-size:7.9px;line-height:7.9px;color:#dcdcdc;font-weight:400;font-style:normal;">Mod.: 3/16/2019 10:24 AM</div>
<div style="left:940px;top:142px;width:144px;height:222px;border:1px solid #4f4f4f;"></div>
<div style="left:948px;top:171px;width:128px;height:85px;background:#000;box-shadow:0 0 3px 1px rgba(0,0,0,0.45);overflow:hidden;"><div style="left:1px;top:1px;width:126px;height:83px;background:radial-gradient(ellipse at 50% 50%, #f8f7f7 0%, #f8f7f7 85%);"></div></div>
<div style="left:1001px;top:244px;width:22px;height:11px;background:rgba(60,60,60,0.62);"></div>
<div class="t" style="left:1001px;top:243px;width:22px;text-align:center;font-size:10.5px;line-height:13px;color:#fff;font-weight:700;">CR2</div>
<svg style="left:972px;top:279px" width="14" height="15"><polygon points="6.80,0.90 8.86,5.07 13.46,5.74 10.13,8.98 10.91,13.56 6.80,11.40 2.69,13.56 3.47,8.98 0.14,5.74 4.74,5.07" fill="#808000" stroke="#ffffff" stroke-width="0.9" stroke-linejoin="round"/></svg>
<svg style="left:988px;top:279px" width="14" height="15"><polygon points="6.80,0.90 8.86,5.07 13.46,5.74 10.13,8.98 10.91,13.56 6.80,11.40 2.69,13.56 3.47,8.98 0.14,5.74 4.74,5.07" fill="#808000" stroke="#ffffff" stroke-width="0.9" stroke-linejoin="round"/></svg>
<svg style="left:1004px;top:279px" width="14" height="15"><polygon points="6.80,0.90 8.86,5.07 13.46,5.74 10.13,8.98 10.91,13.56 6.80,11.40 2.69,13.56 3.47,8.98 0.14,5.74 4.74,5.07" fill="#808000" stroke="#ffffff" stroke-width="0.9" stroke-linejoin="round"/></svg>
<svg style="left:1020px;top:279px" width="14" height="15"><polygon points="6.80,0.90 8.86,5.07 13.46,5.74 10.13,8.98 10.91,13.56 6.80,11.40 2.69,13.56 3.47,8.98 0.14,5.74 4.74,5.07" fill="#808000" stroke="#ffffff" stroke-width="0.9" stroke-linejoin="round"/></svg>
<svg style="left:1036px;top:279px" width="14" height="15"><polygon points="6.80,0.90 8.86,5.07 13.46,5.74 10.13,8.98 10.91,13.56 6.80,11.40 2.69,13.56 3.47,8.98 0.14,5.74 4.74,5.07" fill="#808000" stroke="#ffffff" stroke-width="0.9" stroke-linejoin="round"/></svg>
<div class="t" style="left:909.00px;top:296.03px;width:200px;text-align:center;font-size:10.6px;line-height:10.6px;color:#e6e6e6;font-weight:400;font-style:normal;">TEST_0005.CR2</div>
<div class="t" style="left:912.00px;top:307.53px;width:200px;text-align:center;font-size:10.6px;line-height:10.6px;color:#e6e6e6;font-weight:400;font-style:normal;">Diffuser EV +3</div>
<div class="t" style="left:912.00px;top:319.26px;width:200px;text-align:center;font-size:9.5px;line-height:9.5px;color:#e6e6e6;font-weight:400;font-style:italic;">DUPLICATOR for slides</div>
<div class="t" style="left:912.00px;top:329.61px;width:200px;text-align:center;font-size:7.9px;line-height:7.9px;color:#dcdcdc;font-weight:400;font-style:normal;">3/16/2019 10:24 AM</div>
<div class="t" style="left:912.00px;top:338.61px;width:200px;text-align:center;font-size:7.9px;line-height:7.9px;color:#dcdcdc;font-weight:400;font-style:normal;">Mod.: 3/16/2019 10:24 AM</div>
<div style="left:1094px;top:142px;width:144px;height:222px;border:1px solid #4f4f4f;"></div>
<div style="left:1102px;top:171px;width:128px;height:85px;background:#000;box-shadow:0 0 3px 1px rgba(0,0,0,0.45);overflow:hidden;"><svg width="126" height="83" style="left:1px;top:1px;overflow:hidden"><defs><filter id="f0006" x="-30%" y="-30%" width="160%" height="160%"><feGaussianBlur stdDeviation="1.3"/></filter><filter id="g0006" x="-30%" y="-30%" width="160%" height="160%"><feGaussianBlur stdDeviation="2.2"/></filter></defs><rect width="126" height="83" fill="#0b0a0b"/><g filter="url(#g0006)"><path d="M12 2 Q2 20 6 48" stroke="#8e868c" stroke-width="9" fill="none"/><path d="M104 2 Q122 8 126 34" stroke="#948c92" stroke-width="10" fill="none"/><path d="M124 40 Q126 64 112 84" stroke="#7e767c" stroke-width="8" fill="none"/><path d="M10 60 Q16 78 36 86" stroke="#6e686c" stroke-width="7" fill="none"/></g><g filter="url(#f0006)" fill="#dad2d8"><circle cx="34.6" cy="13.0" r="5.1"/><circle cx="29.7" cy="23.6" r="5.1"/><circle cx="24.8" cy="34.2" r="5.1"/><circle cx="19.9" cy="44.8" r="5.1"/><circle cx="15.0" cy="55.4" r="5.1"/><circle cx="50.0" cy="6.8" r="5.1"/><circle cx="45.1" cy="17.4" r="5.1"/><circle cx="40.2" cy="28.0" r="5.1"/><circle cx="35.3" cy="38.6" r="5.1"/><circle cx="30.4" cy="49.2" r="5.1"/><circle cx="25.5" cy="59.8" r="5.1"/><circle cx="65.4" cy="0.6" r="5.1"/><circle cx="60.5" cy="11.2" r="5.1"/><circle cx="55.6" cy="21.8" r="5.1"/><circle cx="50.7" cy="32.4" r="5.1"/><circle cx="45.8" cy="43.0" r="5.1"/><circle cx="40.9" cy="53.6" r="5.1"/><circle cx="36.0" cy="64.2" r="5.1"/><circle cx="31.1" cy="74.8" r="5.1"/><circle cx="75.9" cy="5.0" r="5.1"/><circle cx="71.0" cy="15.6" r="5.1"/><circle cx="66.1" cy="26.2" r="5.1"/><circle cx="61.2" cy="36.8" r="5.1"/><circle cx="56.3" cy="47.4" r="5.1"/><circle cx="51.4" cy="58.0" r="5.1"/><circle cx="46.5" cy="68.6" r="5.1"/><circle cx="41.6" cy="79.2" r="5.1"/><circle cx="86.4" cy="9.4" r="5.1"/><circle cx="81.5" cy="20.0" r="5.1"/><circle cx="76.6" cy="30.6" r="5.1"/><circle cx="71.7" cy="41.2" r="5.1"/><circle cx="66.8" cy="51.8" r="5.1"/><circle cx="61.9" cy="62.4" r="5.1"/><circle cx="57.0" cy="73.0" r="5.1"/><circle cx="52.1" cy="83.6" r="5.1"/><circle cx="96.9" cy="13.8" r="5.1"/><circle cx="92.0" cy="24.4" r="5.1"/><circle cx="87.1" cy="35.0" r="5.1"/><circle cx="82.2" cy="45.6" r="5.1"/><circle cx="77.3" cy="56.2" r="5.1"/><circle cx="72.4" cy="66.8" r="5.1"/><circle cx="67.5" cy="77.4" r="5.1"/><circle cx="62.6" cy="88.0" r="5.1"/><circle cx="107.4" cy="18.2" r="5.1"/><circle cx="102.5" cy="28.8" r="5.1"/><circle cx="97.6" cy="39.4" r="5.1"/><circle cx="92.7" cy="50.0" r="5.1"/><circle cx="87.8" cy="60.6" r="5.1"/><circle cx="82.9" cy="71.2" r="5.1"/><circle cx="78.0" cy="81.8" r="5.1"/><circle cx="113.0" cy="33.2" r="5.1"/><circle cx="108.1" cy="43.8" r="5.1"/><circle cx="103.2" cy="54.4" r="5.1"/><circle cx="98.3" cy="65.0" r="5.1"/><circle cx="93.4" cy="75.6" r="5.1"/><circle cx="113.7" cy="58.8" r="5.1"/><circle cx="108.8" cy="69.4" r="5.1"/></g></svg></div>
<div style="left:1155px;top:244px;width:22px;height:11px;background:rgba(60,60,60,0.62);"></div>
<div class="t" style="left:1155px;top:243px;width:22px;text-align:center;font-size:10.5px;line-height:13px;color:#fff;font-weight:700;">CR2</div>
<div class="t" style="left:1063.00px;top:296.03px;width:200px;text-align:center;font-size:10.6px;line-height:10.6px;color:#e6e6e6;font-weight:400;font-style:normal;">TEST_0006.CR2</div>
<div class="t" style="left:1066.00px;top:307.53px;width:200px;text-align:center;font-size:10.6px;line-height:10.6px;color:#e6e6e6;font-weight:400;font-style:normal;">Lights</div>
<div class="t" style="left:1066.00px;top:319.26px;width:200px;text-align:center;font-size:9.5px;line-height:9.5px;color:#e6e6e6;font-weight:400;font-style:italic;">DUPLICATOR for slides</div>
<div class="t" style="left:1066.00px;top:329.61px;width:200px;text-align:center;font-size:7.9px;line-height:7.9px;color:#dcdcdc;font-weight:400;font-style:normal;">3/16/2019 10:27 AM</div>
<div class="t" style="left:1066.00px;top:338.61px;width:200px;text-align:center;font-size:7.9px;line-height:7.9px;color:#dcdcdc;font-weight:400;font-style:normal;">Mod.: 3/16/2019 10:27 AM</div>
<div style="left:1248px;top:142px;width:144px;height:222px;border:1px solid #4f4f4f;"></div>
<div style="left:1256px;top:171px;width:128px;height:85px;background:#000;box-shadow:0 0 3px 1px rgba(0,0,0,0.45);overflow:hidden;"><div style="left:1px;top:1px;width:126px;height:83px;background:radial-gradient(ellipse at 50% 50%, #81756f 0%, #776a63 85%);"></div></div>
<div style="left:1309px;top:244px;width:22px;height:11px;background:rgba(60,60,60,0.62);"></div>
<div class="t" style="left:1309px;top:243px;width:22px;text-align:center;font-size:10.5px;line-height:13px;color:#fff;font-weight:700;">CR2</div>
<div class="t" style="left:1217.00px;top:296.03px;width:200px;text-align:center;font-size:10.6px;line-height:10.6px;color:#e6e6e6;font-weight:400;font-style:normal;">TEST_0007.CR2</div>
<div class="t" style="left:1220.00px;top:307.53px;width:200px;text-align:center;font-size:10.6px;line-height:10.6px;color:#e6e6e6;font-weight:400;font-style:normal;">Diffuser EV 0</div>
<div class="t" style="left:1220.00px;top:319.26px;width:200px;text-align:center;font-size:9.5px;line-height:9.5px;color:#e6e6e6;font-weight:400;font-style:italic;">DUPLICATOR for slides</div>
<div class="t" style="left:1220.00px;top:329.61px;width:200px;text-align:center;font-size:7.9px;line-height:7.9px;color:#dcdcdc;font-weight:400;font-style:normal;">3/16/2019 10:27 AM</div>
<div class="t" style="left:1220.00px;top:338.61px;width:200px;text-align:center;font-size:7.9px;line-height:7.9px;color:#dcdcdc;font-weight:400;font-style:normal;">Mod.: 3/16/2019 10:27 AM</div>
<div style="left:324px;top:374px;width:144px;height:222px;border:1px solid #4f4f4f;"></div>
<div style="left:332px;top:403px;width:128px;height:85px;background:#000;box-shadow:0 0 3px 1px rgba(0,0,0,0.45);overflow:hidden;"><div style="left:1px;top:1px;width:126px;height:83px;background:radial-gradient(ellipse at 50% 50%, #bcafaa 0%, #b7a9a3 85%);"></div></div>
<div style="left:385px;top:476px;width:22px;height:11px;background:rgba(60,60,60,0.62);"></div>
<div class="t" style="left:385px;top:475px;width:22px;text-align:center;font-size:10.5px;line-height:13px;color:#fff;font-weight:700;">CR2</div>
<div class="t" style="left:293.00px;top:528.03px;width:200px;text-align:center;font-size:10.6px;line-height:10.6px;color:#e6e6e6;font-weight:400;font-style:normal;">TEST_0008.CR2</div>
<div class="t" style="left:296.00px;top:539.53px;width:200px;text-align:center;font-size:10.6px;line-height:10.6px;color:#e6e6e6;font-weight:400;font-style:normal;">Diffuser EV +1</div>
<div class="t" style="left:296.00px;top:551.26px;width:200px;text-align:center;font-size:9.5px;line-height:9.5px;color:#e6e6e6;font-weight:400;font-style:italic;">DUPLICATOR for slides</div>
<div class="t" style="left:296.00px;top:561.61px;width:200px;text-align:center;font-size:7.9px;line-height:7.9px;color:#dcdcdc;font-weight:400;font-style:normal;">3/16/2019 10:27 AM</div>
<div class="t" style="left:296.00px;top:570.61px;width:200px;text-align:center;font-size:7.9px;line-height:7.9px;color:#dcdcdc;font-weight:400;font-style:normal;">Mod.: 3/16/2019 10:27 AM</div>
<div style="left:478px;top:374px;width:144px;height:222px;border:1px solid #4f4f4f;"></div>
<div style="left:486px;top:403px;width:128px;height:85px;background:#000;box-shadow:0 0 3px 1px rgba(0,0,0,0.45);overflow:hidden;"><div style="left:1px;top:1px;width:126px;height:83px;background:radial-gradient(ellipse at 50% 50%, #dbd0ca 0%, #d8ccc6 85%);"></div></div>
<div style="left:539px;top:476px;width:22px;height:11px;background:rgba(60,60,60,0.62);"></div>
<div class="t" style="left:539px;top:475px;width:22px;text-align:center;font-size:10.5px;line-height:13px;color:#fff;font-weight:700;">CR2</div>
<div class="t" style="left:447.00px;top:528.03px;width:200px;text-align:center;font-size:10.6px;line-height:10.6px;color:#e6e6e6;font-weight:400;font-style:normal;">TEST_0009.CR2</div>
<div class="t" style="left:450.00px;top:539.53px;width:200px;text-align:center;font-size:10.6px;line-height:10.6px;color:#e6e6e6;font-weight:400;font-style:normal;">Diffuser EV +2</div>
<div class="t" style="left:450.00px;top:551.26px;width:200px;text-align:center;font-size:9.5px;line-height:9.5px;color:#e6e6e6;font-weight:400;font-style:italic;">DUPLICATOR for slides</div>
<div class="t" style="left:450.00px;top:561.61px;width:200px;text-align:center;font-size:7.9px;line-height:7.9px;color:#dcdcdc;font-weight:400;font-style:normal;">3/16/2019 10:28 AM</div>
<div class="t" style="left:450.00px;top:570.61px;width:200px;text-align:center;font-size:7.9px;line-height:7.9px;color:#dcdcdc;font-weight:400;font-style:normal;">Mod.: 3/16/2019 10:28 AM</div>
<div style="left:632px;top:374px;width:144px;height:222px;border:1px solid #4f4f4f;"></div>
<div style="left:640px;top:403px;width:128px;height:85px;background:#000;box-shadow:0 0 3px 1px rgba(0,0,0,0.45);overflow:hidden;"><div style="left:1px;top:1px;width:126px;height:83px;background:radial-gradient(ellipse at 50% 50%, #f6f4f4 0%, #f6f4f4 85%);"></div></div>
<div style="left:693px;top:476px;width:22px;height:11px;background:rgba(60,60,60,0.62);"></div>
<div class="t" style="left:693px;top:475px;width:22px;text-align:center;font-size:10.5px;line-height:13px;color:#fff;font-weight:700;">CR2</div>
<svg style="left:664px;top:511px" width="14" height="15"><polygon points="6.80,0.90 8.86,5.07 13.46,5.74 10.13,8.98 10.91,13.56 6.80,11.40 2.69,13.56 3.47,8.98 0.14,5.74 4.74,5.07" fill="#808000" stroke="#ffffff" stroke-width="0.9" stroke-linejoin="round"/></svg>
<svg style="left:680px;top:511px" width="14" height="15"><polygon points="6.80,0.90 8.86,5.07 13.46,5.74 10.13,8.98 10.91,13.56 6.80,11.40 2.69,13.56 3.47,8.98 0.14,5.74 4.74,5.07" fill="#808000" stroke="#ffffff" stroke-width="0.9" stroke-linejoin="round"/></svg>
<svg style="left:696px;top:511px" width="14" height="15"><polygon points="6.80,0.90 8.86,5.07 13.46,5.74 10.13,8.98 10.91,13.56 6.80,11.40 2.69,13.56 3.47,8.98 0.14,5.74 4.74,5.07" fill="#808000" stroke="#ffffff" stroke-width="0.9" stroke-linejoin="round"/></svg>
<svg style="left:712px;top:511px" width="14" height="15"><polygon points="6.80,0.90 8.86,5.07 13.46,5.74 10.13,8.98 10.91,13.56 6.80,11.40 2.69,13.56 3.47,8.98 0.14,5.74 4.74,5.07" fill="#808000" stroke="#ffffff" stroke-width="0.9" stroke-linejoin="round"/></svg>
<svg style="left:728px;top:511px" width="14" height="15"><polygon points="6.80,0.90 8.86,5.07 13.46,5.74 10.13,8.98 10.91,13.56 6.80,11.40 2.69,13.56 3.47,8.98 0.14,5.74 4.74,5.07" fill="#808000" stroke="#ffffff" stroke-width="0.9" stroke-linejoin="round"/></svg>
<div class="t" style="left:601.00px;top:528.03px;width:200px;text-align:center;font-size:10.6px;line-height:10.6px;color:#e6e6e6;font-weight:400;font-style:normal;">TEST_0010.CR2</div>
<div class="t" style="left:604.00px;top:539.53px;width:200px;text-align:center;font-size:10.6px;line-height:10.6px;color:#e6e6e6;font-weight:400;font-style:normal;">Diffuser EV +3</div>
<div class="t" style="left:604.00px;top:551.26px;width:200px;text-align:center;font-size:9.5px;line-height:9.5px;color:#e6e6e6;font-weight:400;font-style:italic;">DUPLICATOR for slides</div>
<div class="t" style="left:604.00px;top:561.61px;width:200px;text-align:center;font-size:7.9px;line-height:7.9px;color:#dcdcdc;font-weight:400;font-style:normal;">3/16/2019 10:28 AM</div>
<div class="t" style="left:604.00px;top:570.61px;width:200px;text-align:center;font-size:7.9px;line-height:7.9px;color:#dcdcdc;font-weight:400;font-style:normal;">Mod.: 3/16/2019 10:28 AM</div>
<div style="left:786px;top:374px;width:144px;height:222px;border:1px solid #4f4f4f;"></div>
<div style="left:794px;top:403px;width:128px;height:85px;background:#000;box-shadow:0 0 3px 1px rgba(0,0,0,0.45);overflow:hidden;"><div style="left:1px;top:1px;width:126px;height:83px;background:radial-gradient(ellipse at 50% 50%, #80756d 0%, #766961 85%);"></div></div>
<div style="left:847px;top:476px;width:22px;height:11px;background:rgba(60,60,60,0.62);"></div>
<div class="t" style="left:847px;top:475px;width:22px;text-align:center;font-size:10.5px;line-height:13px;color:#fff;font-weight:700;">CR2</div>
<div class="t" style="left:755.00px;top:528.03px;width:200px;text-align:center;font-size:10.6px;line-height:10.6px;color:#e6e6e6;font-weight:400;font-style:normal;">TEST_0011.CR2</div>
<div class="t" style="left:758.00px;top:539.53px;width:200px;text-align:center;font-size:10.6px;line-height:10.6px;color:#e6e6e6;font-weight:400;font-style:normal;">Diffuser EV 0</div>
<div class="t" style="left:758.00px;top:551.26px;width:200px;text-align:center;font-size:9.5px;line-height:9.5px;color:#e6e6e6;font-weight:400;font-style:italic;">DUPLICATOR for slides</div>
<div class="t" style="left:758.00px;top:561.61px;width:200px;text-align:center;font-size:7.9px;line-height:7.9px;color:#dcdcdc;font-weight:400;font-style:normal;">3/16/2019 10:30 AM</div>
<div class="t" style="left:758.00px;top:570.61px;width:200px;text-align:center;font-size:7.9px;line-height:7.9px;color:#dcdcdc;font-weight:400;font-style:normal;">Mod.: 3/16/2019 10:30 AM</div>
<div style="left:940px;top:374px;width:144px;height:222px;border:1px solid #4f4f4f;"></div>
<div style="left:948px;top:403px;width:128px;height:85px;background:#000;box-shadow:0 0 3px 1px rgba(0,0,0,0.45);overflow:hidden;"><div style="left:1px;top:1px;width:126px;height:83px;background:radial-gradient(ellipse at 50% 50%, #b8aba4 0%, #b2a49d 85%);"></div></div>
<div style="left:1001px;top:476px;width:22px;height:11px;background:rgba(60,60,60,0.62);"></div>
<div class="t" style="left:1001px;top:475px;width:22px;text-align:center;font-size:10.5px;line-height:13px;color:#fff;font-weight:700;">CR2</div>
<div class="t" style="left:909.00px;top:528.03px;width:200px;text-align:center;font-size:10.6px;line-height:10.6px;color:#e6e6e6;font-weight:400;font-style:normal;">TEST_0012.CR2</div>
<div class="t" style="left:912.00px;top:539.53px;width:200px;text-align:center;font-size:10.6px;line-height:10.6px;color:#e6e6e6;font-weight:400;font-style:normal;">Diffuser EV +1</div>
<div class="t" style="left:912.00px;top:551.26px;width:200px;text-align:center;font-size:9.5px;line-height:9.5px;color:#e6e6e6;font-weight:400;font-style:italic;">DUPLICATOR for slides</div>
<div class="t" style="left:912.00px;top:561.61px;width:200px;text-align:center;font-size:7.9px;line-height:7.9px;color:#dcdcdc;font-weight:400;font-style:normal;">3/16/2019 10:30 AM</div>
<div class="t" style="left:912.00px;top:570.61px;width:200px;text-align:center;font-size:7.9px;line-height:7.9px;color:#dcdcdc;font-weight:400;font-style:normal;">Mod.: 3/16/2019 10:30 AM</div>
<div style="left:1094px;top:374px;width:144px;height:222px;border:1px solid #4f4f4f;"></div>
<div style="left:1102px;top:403px;width:128px;height:85px;background:#000;box-shadow:0 0 3px 1px rgba(0,0,0,0.45);overflow:hidden;"><div style="left:1px;top:1px;width:126px;height:83px;background:radial-gradient(ellipse at 50% 50%, #f6f4f4 0%, #f6f4f4 85%);"></div></div>
<div style="left:1155px;top:476px;width:22px;height:11px;background:rgba(60,60,60,0.62);"></div>
<div class="t" style="left:1155px;top:475px;width:22px;text-align:center;font-size:10.5px;line-height:13px;color:#fff;font-weight:700;">CR2</div>
<svg style="left:1126px;top:511px" width="14" height="15"><polygon points="6.80,0.90 8.86,5.07 13.46,5.74 10.13,8.98 10.91,13.56 6.80,11.40 2.69,13.56 3.47,8.98 0.14,5.74 4.74,5.07" fill="#808000" stroke="#ffffff" stroke-width="0.9" stroke-linejoin="round"/></svg>
<svg style="left:1142px;top:511px" width="14" height="15"><polygon points="6.80,0.90 8.86,5.07 13.46,5.74 10.13,8.98 10.91,13.56 6.80,11.40 2.69,13.56 3.47,8.98 0.14,5.74 4.74,5.07" fill="#808000" stroke="#ffffff" stroke-width="0.9" stroke-linejoin="round"/></svg>
<svg style="left:1158px;top:511px" width="14" height="15"><polygon points="6.80,0.90 8.86,5.07 13.46,5.74 10.13,8.98 10.91,13.56 6.80,11.40 2.69,13.56 3.47,8.98 0.14,5.74 4.74,5.07" fill="#808000" stroke="#ffffff" stroke-width="0.9" stroke-linejoin="round"/></svg>
<svg style="left:1174px;top:511px" width="14" height="15"><polygon points="6.80,0.90 8.86,5.07 13.46,5.74 10.13,8.98 10.91,13.56 6.80,11.40 2.69,13.56 3.47,8.98 0.14,5.74 4.74,5.07" fill="#808000" stroke="#ffffff" stroke-width="0.9" stroke-linejoin="round"/></svg>
<svg style="left:1190px;top:511px" width="14" height="15"><polygon points="6.80,0.90 8.86,5.07 13.46,5.74 10.13,8.98 10.91,13.56 6.80,11.40 2.69,13.56 3.47,8.98 0.14,5.74 4.74,5.07" fill="#808000" stroke="#ffffff" stroke-width="0.9" stroke-linejoin="round"/></svg>
<div class="t" style="left:1063.00px;top:528.03px;width:200px;text-align:center;font-size:10.6px;line-height:10.6px;color:#e6e6e6;font-weight:400;font-style:normal;">TEST_0013.CR2</div>
<div class="t" style="left:1066.00px;top:539.53px;width:200px;text-align:center;font-size:10.6px;line-height:10.6px;color:#e6e6e6;font-weight:400;font-style:normal;">Diffuser EV +3</div>
<div class="t" style="left:1066.00px;top:551.26px;width:200px;text-align:center;font-size:9.5px;line-height:9.5px;color:#e6e6e6;font-weight:400;font-style:italic;">DUPLICATOR for slides</div>
<div class="t" style="left:1066.00px;top:561.61px;width:200px;text-align:center;font-size:7.9px;line-height:7.9px;color:#dcdcdc;font-weight:400;font-style:normal;">3/16/2019 10:30 AM</div>
<div class="t" style="left:1066.00px;top:570.61px;width:200px;text-align:center;font-size:7.9px;line-height:7.9px;color:#dcdcdc;font-weight:400;font-style:normal;">Mod.: 3/16/2019 10:30 AM</div>
<div style="left:1248px;top:374px;width:144px;height:222px;border:1px solid #4f4f4f;"></div>
<div style="left:1256px;top:403px;width:128px;height:85px;background:#000;box-shadow:0 0 3px 1px rgba(0,0,0,0.45);overflow:hidden;"><svg width="126" height="83" style="left:1px;top:1px;overflow:hidden"><defs><filter id="f0014" x="-30%" y="-30%" width="160%" height="160%"><feGaussianBlur stdDeviation="1.1"/></filter><filter id="g0014" x="-30%" y="-30%" width="160%" height="160%"><feGaussianBlur stdDeviation="2.2"/></filter></defs><rect width="126" height="83" fill="#0b0a0b"/><g filter="url(#g0014)"><ellipse cx="63" cy="42" rx="62" ry="52" stroke="#7a7378" stroke-width="12" fill="none" opacity="0.8"/><ellipse cx="8" cy="10" rx="12" ry="14" fill="#8a8288" opacity="0.8"/><ellipse cx="120" cy="10" rx="12" ry="14" fill="#8a8288" opacity="0.8"/><ellipse cx="22" cy="52" rx="5" ry="12" fill="#8a8288"/><ellipse cx="110" cy="50" rx="5" ry="12" fill="#7a7478"/></g><g filter="url(#f0014)" fill="#c7bfc6"><circle cx="33.0" cy="10.5" r="4.7"/><circle cx="32.7" cy="20.5" r="4.7"/><circle cx="32.4" cy="30.5" r="4.7"/><circle cx="32.1" cy="40.5" r="4.7"/><circle cx="31.8" cy="50.5" r="4.7"/><circle cx="31.5" cy="60.5" r="4.7"/><circle cx="31.2" cy="70.5" r="4.7"/><circle cx="43.1" cy="10.6" r="4.7"/><circle cx="42.8" cy="20.6" r="4.7"/><circle cx="42.5" cy="30.6" r="4.7"/><circle cx="42.2" cy="40.6" r="4.7"/><circle cx="41.9" cy="50.6" r="4.7"/><circle cx="41.6" cy="60.6" r="4.7"/><circle cx="41.3" cy="70.6" r="4.7"/><circle cx="53.2" cy="10.7" r="4.7"/><circle cx="52.9" cy="20.7" r="4.7"/><circle cx="52.6" cy="30.7" r="4.7"/><circle cx="52.3" cy="40.7" r="4.7"/><circle cx="52.0" cy="50.7" r="4.7"/><circle cx="51.7" cy="60.7" r="4.7"/><circle cx="51.4" cy="70.7" r="4.7"/><circle cx="63.3" cy="10.8" r="4.7"/><circle cx="63.0" cy="20.8" r="4.7"/><circle cx="62.7" cy="30.8" r="4.7"/><circle cx="62.4" cy="40.8" r="4.7"/><circle cx="62.1" cy="50.8" r="4.7"/><circle cx="61.8" cy="60.8" r="4.7"/><circle cx="61.5" cy="70.8" r="4.7"/><circle cx="73.4" cy="10.9" r="4.7"/><circle cx="73.1" cy="20.9" r="4.7"/><circle cx="72.8" cy="30.9" r="4.7"/><circle cx="72.5" cy="40.9" r="4.7"/><circle cx="72.2" cy="50.9" r="4.7"/><circle cx="71.9" cy="60.9" r="4.7"/><circle cx="71.6" cy="70.9" r="4.7"/><circle cx="83.5" cy="11.0" r="4.7"/><circle cx="83.2" cy="21.0" r="4.7"/><circle cx="82.9" cy="31.0" r="4.7"/><circle cx="82.6" cy="41.0" r="4.7"/><circle cx="82.3" cy="51.0" r="4.7"/><circle cx="82.0" cy="61.0" r="4.7"/><circle cx="81.7" cy="71.0" r="4.7"/><circle cx="93.6" cy="11.1" r="4.7"/><circle cx="93.3" cy="21.1" r="4.7"/><circle cx="93.0" cy="31.1" r="4.7"/><circle cx="92.7" cy="41.1" r="4.7"/><circle cx="92.4" cy="51.1" r="4.7"/><circle cx="92.1" cy="61.1" r="4.7"/><circle cx="91.8" cy="71.1" r="4.7"/><circle cx="103.4" cy="21.2" r="4.7"/><circle cx="103.1" cy="31.2" r="4.7"/><circle cx="102.8" cy="41.2" r="4.7"/><circle cx="102.5" cy="51.2" r="4.7"/><circle cx="102.2" cy="61.2" r="4.7"/><circle cx="101.9" cy="71.2" r="4.7"/></g></svg></div>
<div style="left:1309px;top:476px;width:22px;height:11px;background:rgba(60,60,60,0.62);"></div>
<div class="t" style="left:1309px;top:475px;width:22px;text-align:center;font-size:10.5px;line-height:13px;color:#fff;font-weight:700;">CR2</div>
<div class="t" style="left:1217.00px;top:528.03px;width:200px;text-align:center;font-size:10.6px;line-height:10.6px;color:#e6e6e6;font-weight:400;font-style:normal;">TEST_0014.CR2</div>
<div class="t" style="left:1220.00px;top:539.53px;width:200px;text-align:center;font-size:10.6px;line-height:10.6px;color:#e6e6e6;font-weight:400;font-style:normal;">Lights</div>
<div class="t" style="left:1220.00px;top:551.26px;width:200px;text-align:center;font-size:9.5px;line-height:9.5px;color:#e6e6e6;font-weight:400;font-style:italic;">DUPLICATOR for slides</div>
<div class="t" style="left:1220.00px;top:561.61px;width:200px;text-align:center;font-size:7.9px;line-height:7.9px;color:#dcdcdc;font-weight:400;font-style:normal;">3/16/2019 10:31 AM</div>
<div class="t" style="left:1220.00px;top:570.61px;width:200px;text-align:center;font-size:7.9px;line-height:7.9px;color:#dcdcdc;font-weight:400;font-style:normal;">Mod.: 3/16/2019 10:31 AM</div>
<div style="left:324px;top:606px;width:144px;height:222px;background:#aaaaaa;border:1px solid #5a5a5a;"></div>
<div style="left:325px;top:607px;width:142px;height:220px;border:5px solid #e06a5c;"></div>
<div style="left:332px;top:635px;width:128px;height:85px;background:#000;box-shadow:0 0 3px 1px rgba(0,0,0,0.45);overflow:hidden;"><div style="left:1px;top:1px;width:126px;height:83px;background:radial-gradient(ellipse at 50% 50%, #ffffff 0%, #ffffff 85%);"></div></div>
<div style="left:385px;top:708px;width:22px;height:11px;background:rgba(60,60,60,0.62);"></div>
<div class="t" style="left:385px;top:707px;width:22px;text-align:center;font-size:10.5px;line-height:13px;color:#fff;font-weight:700;">CR2</div>
<svg style="left:331px;top:745px" width="14" height="14"><path d="M0.7 0.5 V12.5" stroke="#2a2a2a" stroke-width="1.2"/><path d="M1.3 0.8 C4 0.2 6 2 8 2.2 L11 3.6 L8.5 5.2 C6 6 4 5.5 1.3 6.8 Z" fill="#dc3a52"/></svg>
<svg style="left:356px;top:743px" width="14" height="15"><polygon points="6.80,0.90 8.86,5.07 13.46,5.74 10.13,8.98 10.91,13.56 6.80,11.40 2.69,13.56 3.47,8.98 0.14,5.74 4.74,5.07" fill="#808000" stroke="#ffffff" stroke-width="0.9" stroke-linejoin="round"/></svg>
<svg style="left:372px;top:743px" width="14" height="15"><polygon points="6.80,0.90 8.86,5.07 13.46,5.74 10.13,8.98 10.91,13.56 6.80,11.40 2.69,13.56 3.47,8.98 0.14,5.74 4.74,5.07" fill="#808000" stroke="#ffffff" stroke-width="0.9" stroke-linejoin="round"/></svg>
<svg style="left:388px;top:743px" width="14" height="15"><polygon points="6.80,0.90 8.86,5.07 13.46,5.74 10.13,8.98 10.91,13.56 6.80,11.40 2.69,13.56 3.47,8.98 0.14,5.74 4.74,5.07" fill="#808000" stroke="#ffffff" stroke-width="0.9" stroke-linejoin="round"/></svg>
<svg style="left:404px;top:743px" width="14" height="15"><polygon points="6.80,0.90 8.86,5.07 13.46,5.74 10.13,8.98 10.91,13.56 6.80,11.40 2.69,13.56 3.47,8.98 0.14,5.74 4.74,5.07" fill="#808000" stroke="#ffffff" stroke-width="0.9" stroke-linejoin="round"/></svg>
<svg style="left:420px;top:743px" width="14" height="15"><polygon points="6.80,0.90 8.86,5.07 13.46,5.74 10.13,8.98 10.91,13.56 6.80,11.40 2.69,13.56 3.47,8.98 0.14,5.74 4.74,5.07" fill="#808000" stroke="#ffffff" stroke-width="0.9" stroke-linejoin="round"/></svg>
<div class="t" style="left:293.00px;top:760.03px;width:200px;text-align:center;font-size:10.6px;line-height:10.6px;color:#1e1e1e;font-weight:400;font-style:normal;">TEST_0015.CR2</div>
<div class="t" style="left:296.00px;top:771.53px;width:200px;text-align:center;font-size:10.6px;line-height:10.6px;color:#1e1e1e;font-weight:400;font-style:normal;">Diffuser</div>
<div class="t" style="left:296.00px;top:783.26px;width:200px;text-align:center;font-size:9.5px;line-height:9.5px;color:#1e1e1e;font-weight:400;font-style:italic;">DUPLICATOR for slides</div>
<div class="t" style="left:296.00px;top:793.61px;width:200px;text-align:center;font-size:7.9px;line-height:7.9px;color:#2a2a2a;font-weight:400;font-style:normal;">3/16/2019 10:51 AM</div>
<div class="t" style="left:296.00px;top:802.61px;width:200px;text-align:center;font-size:7.9px;line-height:7.9px;color:#2a2a2a;font-weight:400;font-style:normal;">Mod.: 3/16/2019 10:51 AM</div>
<div style="left:478px;top:606px;width:144px;height:222px;background:#aaaaaa;border:1px solid #5a5a5a;"></div>
<div style="left:479px;top:607px;width:142px;height:220px;border:5px solid #e06a5c;"></div>
<div style="left:486px;top:635px;width:128px;height:85px;background:#000;box-shadow:0 0 3px 1px rgba(0,0,0,0.45);overflow:hidden;"><div style="left:1px;top:1px;width:126px;height:83px;background:radial-gradient(ellipse at 50% 50%, #dfd5d1 0%, #ddd2cd 85%);"></div></div>
<div style="left:539px;top:708px;width:22px;height:11px;background:rgba(60,60,60,0.62);"></div>
<div class="t" style="left:539px;top:707px;width:22px;text-align:center;font-size:10.5px;line-height:13px;color:#fff;font-weight:700;">CR2</div>
<svg style="left:485px;top:745px" width="14" height="14"><path d="M0.7 0.5 V12.5" stroke="#2a2a2a" stroke-width="1.2"/><path d="M1.3 0.8 C4 0.2 6 2 8 2.2 L11 3.6 L8.5 5.2 C6 6 4 5.5 1.3 6.8 Z" fill="#dc3a52"/></svg>
<div class="t" style="left:447.00px;top:760.03px;width:200px;text-align:center;font-size:10.6px;line-height:10.6px;color:#1e1e1e;font-weight:400;font-style:normal;">TEST_0016.CR2</div>
<div class="t" style="left:450.00px;top:771.53px;width:200px;text-align:center;font-size:10.6px;line-height:10.6px;color:#1e1e1e;font-weight:400;font-style:normal;">Diffuser</div>
<div class="t" style="left:450.00px;top:783.26px;width:200px;text-align:center;font-size:9.5px;line-height:9.5px;color:#1e1e1e;font-weight:400;font-style:italic;">DUPLICATOR for slides</div>
<div class="t" style="left:450.00px;top:793.61px;width:200px;text-align:center;font-size:7.9px;line-height:7.9px;color:#2a2a2a;font-weight:400;font-style:normal;">3/16/2019 10:57 AM</div>
<div class="t" style="left:450.00px;top:802.61px;width:200px;text-align:center;font-size:7.9px;line-height:7.9px;color:#2a2a2a;font-weight:400;font-style:normal;">Mod.: 3/16/2019 10:57 AM</div>
<div style="left:632px;top:606px;width:144px;height:222px;background:#aaaaaa;border:1px solid #5a5a5a;"></div>
<div style="left:633px;top:607px;width:142px;height:220px;border:5px solid #e06a5c;"></div>
<div style="left:640px;top:635px;width:128px;height:85px;background:#000;box-shadow:0 0 3px 1px rgba(0,0,0,0.45);overflow:hidden;"><div style="left:1px;top:1px;width:126px;height:83px;background:radial-gradient(ellipse at 50% 50%, #f0ecec 0%, #efebeb 85%);"></div></div>
<div style="left:693px;top:708px;width:22px;height:11px;background:rgba(60,60,60,0.62);"></div>
<div class="t" style="left:693px;top:707px;width:22px;text-align:center;font-size:10.5px;line-height:13px;color:#fff;font-weight:700;">CR2</div>
<svg style="left:639px;top:745px" width="14" height="14"><path d="M0.7 0.5 V12.5" stroke="#2a2a2a" stroke-width="1.2"/><path d="M1.3 0.8 C4 0.2 6 2 8 2.2 L11 3.6 L8.5 5.2 C6 6 4 5.5 1.3 6.8 Z" fill="#dc3a52"/></svg>
<svg style="left:664px;top:743px" width="14" height="15"><polygon points="6.80,0.90 8.86,5.07 13.46,5.74 10.13,8.98 10.91,13.56 6.80,11.40 2.69,13.56 3.47,8.98 0.14,5.74 4.74,5.07" fill="#808000" stroke="#ffffff" stroke-width="0.9" stroke-linejoin="round"/></svg>
<svg style="left:680px;top:743px" width="14" height="15"><polygon points="6.80,0.90 8.86,5.07 13.46,5.74 10.13,8.98 10.91,13.56 6.80,11.40 2.69,13.56 3.47,8.98 0.14,5.74 4.74,5.07" fill="#808000" stroke="#ffffff" stroke-width="0.9" stroke-linejoin="round"/></svg>
<svg style="left:696px;top:743px" width="14" height="15"><polygon points="6.80,0.90 8.86,5.07 13.46,5.74 10.13,8.98 10.91,13.56 6.80,11.40 2.69,13.56 3.47,8.98 0.14,5.74 4.74,5.07" fill="#808000" stroke="#ffffff" stroke-width="0.9" stroke-linejoin="round"/></svg>
<svg style="left:712px;top:743px" width="14" height="15"><polygon points="6.80,0.90 8.86,5.07 13.46,5.74 10.13,8.98 10.91,13.56 6.80,11.40 2.69,13.56 3.47,8.98 0.14,5.74 4.74,5.07" fill="#808000" stroke="#ffffff" stroke-width="0.9" stroke-linejoin="round"/></svg>
<svg style="left:728px;top:743px" width="14" height="15"><polygon points="6.80,0.90 8.86,5.07 13.46,5.74 10.13,8.98 10.91,13.56 6.80,11.40 2.69,13.56 3.47,8.98 0.14,5.74 4.74,5.07" fill="#808000" stroke="#ffffff" stroke-width="0.9" stroke-linejoin="round"/></svg>
<div class="t" style="left:601.00px;top:760.03px;width:200px;text-align:center;font-size:10.6px;line-height:10.6px;color:#1e1e1e;font-weight:400;font-style:normal;">TEST_0017.CR2</div>
<div class="t" style="left:604.00px;top:771.53px;width:200px;text-align:center;font-size:10.6px;line-height:10.6px;color:#1e1e1e;font-weight:400;font-style:normal;">Diffuser</div>
<div class="t" style="left:604.00px;top:783.26px;width:200px;text-align:center;font-size:9.5px;line-height:9.5px;color:#1e1e1e;font-weight:400;font-style:italic;">DUPLICATOR for slides</div>
<div class="t" style="left:604.00px;top:793.61px;width:200px;text-align:center;font-size:7.9px;line-height:7.9px;color:#2a2a2a;font-weight:400;font-style:normal;">3/16/2019 10:59 AM</div>
<div class="t" style="left:604.00px;top:802.61px;width:200px;text-align:center;font-size:7.9px;line-height:7.9px;color:#2a2a2a;font-weight:400;font-style:normal;">Mod.: 3/16/2019 11:00 AM</div>
<div style="left:786px;top:606px;width:144px;height:222px;background:#aaaaaa;border:1px solid #5a5a5a;"></div>
<div style="left:787px;top:607px;width:142px;height:220px;border:5px solid #e06a5c;"></div>
<div style="left:794px;top:635px;width:128px;height:85px;background:#000;box-shadow:0 0 3px 1px rgba(0,0,0,0.45);overflow:hidden;"><div style="left:1px;top:1px;width:126px;height:83px;background:radial-gradient(ellipse at 50% 50%, #ffffff 0%, #ffffff 85%);"></div></div>
<div style="left:847px;top:708px;width:22px;height:11px;background:rgba(60,60,60,0.62);"></div>
<div class="t" style="left:847px;top:707px;width:22px;text-align:center;font-size:10.5px;line-height:13px;color:#fff;font-weight:700;">CR2</div>
<svg style="left:793px;top:745px" width="14" height="14"><path d="M0.7 0.5 V12.5" stroke="#2a2a2a" stroke-width="1.2"/><path d="M1.3 0.8 C4 0.2 6 2 8 2.2 L11 3.6 L8.5 5.2 C6 6 4 5.5 1.3 6.8 Z" fill="#dc3a52"/></svg>
<div class="t" style="left:755.00px;top:760.03px;width:200px;text-align:center;font-size:10.6px;line-height:10.6px;color:#1e1e1e;font-weight:400;font-style:normal;">TEST_0018.CR2</div>
<div class="t" style="left:758.00px;top:771.53px;width:200px;text-align:center;font-size:10.6px;line-height:10.6px;color:#1e1e1e;font-weight:400;font-style:normal;">Diffuser</div>
<div class="t" style="left:758.00px;top:783.26px;width:200px;text-align:center;font-size:9.5px;line-height:9.5px;color:#1e1e1e;font-weight:400;font-style:italic;">DUPLICATOR for slides</div>
<div class="t" style="left:758.00px;top:793.61px;width:200px;text-align:center;font-size:7.9px;line-height:7.9px;color:#2a2a2a;font-weight:400;font-style:normal;">3/16/2019 11:01 AM</div>
<div class="t" style="left:758.00px;top:802.61px;width:200px;text-align:center;font-size:7.9px;line-height:7.9px;color:#2a2a2a;font-weight:400;font-style:normal;">Mod.: 3/16/2019 11:01 AM</div>
<div style="left:940px;top:606px;width:144px;height:222px;border:1px solid #4f4f4f;"></div>
<div style="left:948px;top:635px;width:128px;height:85px;background:#000;box-shadow:0 0 3px 1px rgba(0,0,0,0.45);overflow:hidden;"><div style="left:1px;top:1px;width:126px;height:83px;background:radial-gradient(ellipse at 50% 50%, #d6cac5 0%, #d3c6c0 85%);"></div></div>
<div style="left:1001px;top:708px;width:22px;height:11px;background:rgba(60,60,60,0.62);"></div>
<div class="t" style="left:1001px;top:707px;width:22px;text-align:center;font-size:10.5px;line-height:13px;color:#fff;font-weight:700;">CR2</div>
<div class="t" style="left:909.00px;top:760.03px;width:200px;text-align:center;font-size:10.6px;line-height:10.6px;color:#e6e6e6;font-weight:400;font-style:normal;">TEST_0019.CR2</div>
<div class="t" style="left:912.00px;top:771.53px;width:200px;text-align:center;font-size:10.6px;line-height:10.6px;color:#e6e6e6;font-weight:400;font-style:normal;">Diffuser EV +2</div>
<div class="t" style="left:912.00px;top:783.26px;width:200px;text-align:center;font-size:9.5px;line-height:9.5px;color:#e6e6e6;font-weight:400;font-style:italic;">DUPLICATOR for slides</div>
<div class="t" style="left:912.00px;top:793.61px;width:200px;text-align:center;font-size:7.9px;line-height:7.9px;color:#dcdcdc;font-weight:400;font-style:normal;">3/16/2019 11:10 AM</div>
<div class="t" style="left:912.00px;top:802.61px;width:200px;text-align:center;font-size:7.9px;line-height:7.9px;color:#dcdcdc;font-weight:400;font-style:normal;">Mod.: 3/16/2019 11:10 AM</div>
<div style="left:1094px;top:606px;width:144px;height:222px;border:1px solid #4f4f4f;"></div>
<div style="left:1102px;top:635px;width:128px;height:85px;background:#000;box-shadow:0 0 3px 1px rgba(0,0,0,0.45);overflow:hidden;"><svg width="126" height="83" style="left:1px;top:1px;overflow:hidden"><defs><filter id="f0020" x="-30%" y="-30%" width="160%" height="160%"><feGaussianBlur stdDeviation="0.8"/></filter><filter id="g0020" x="-30%" y="-30%" width="160%" height="160%"><feGaussianBlur stdDeviation="2.2"/></filter></defs><rect width="126" height="83" fill="#141214"/><g filter="url(#f0020)" fill="#f4f0f0"><circle cx="4.2" cy="3.4" r="5.3"/><circle cx="16.5" cy="-6.6" r="5.3"/><circle cx="1.7" cy="25.5" r="5.3"/><circle cx="14.0" cy="15.5" r="5.3"/><circle cx="26.3" cy="5.6" r="5.3"/><circle cx="38.6" cy="-4.3" r="5.3"/><circle cx="-0.8" cy="47.6" r="5.3"/><circle cx="11.5" cy="37.6" r="5.3"/><circle cx="23.8" cy="27.7" r="5.3"/><circle cx="36.1" cy="17.8" r="5.3"/><circle cx="48.4" cy="7.8" r="5.3"/><circle cx="60.7" cy="-2.1" r="5.3"/><circle cx="-3.3" cy="69.7" r="5.3"/><circle cx="9.0" cy="59.8" r="5.3"/><circle cx="21.3" cy="49.8" r="5.3"/><circle cx="33.6" cy="39.8" r="5.3"/><circle cx="45.9" cy="29.9" r="5.3"/><circle cx="58.2" cy="19.9" r="5.3"/><circle cx="70.5" cy="10.0" r="5.3"/><circle cx="82.8" cy="0.1" r="5.3"/><circle cx="6.5" cy="81.8" r="5.3"/><circle cx="18.8" cy="71.9" r="5.3"/><circle cx="31.1" cy="62.0" r="5.3"/><circle cx="43.4" cy="52.0" r="5.3"/><circle cx="55.7" cy="42.1" r="5.3"/><circle cx="68.0" cy="32.1" r="5.3"/><circle cx="80.3" cy="22.2" r="5.3"/><circle cx="92.6" cy="12.2" r="5.3"/><circle cx="104.9" cy="2.3" r="5.3"/><circle cx="117.2" cy="-7.7" r="5.3"/><circle cx="28.6" cy="84.0" r="5.3"/><circle cx="40.9" cy="74.1" r="5.3"/><circle cx="53.2" cy="64.2" r="5.3"/><circle cx="65.5" cy="54.2" r="5.3"/><circle cx="77.8" cy="44.2" r="5.3"/><circle cx="90.1" cy="34.3" r="5.3"/><circle cx="102.4" cy="24.4" r="5.3"/><circle cx="114.7" cy="14.4" r="5.3"/><circle cx="127.0" cy="4.5" r="5.3"/><circle cx="50.7" cy="86.2" r="5.3"/><circle cx="63.0" cy="76.3" r="5.3"/><circle cx="75.3" cy="66.3" r="5.3"/><circle cx="87.6" cy="56.4" r="5.3"/><circle cx="99.9" cy="46.4" r="5.3"/><circle cx="112.2" cy="36.5" r="5.3"/><circle cx="124.5" cy="26.5" r="5.3"/><circle cx="72.8" cy="88.5" r="5.3"/><circle cx="85.1" cy="78.5" r="5.3"/><circle cx="97.4" cy="68.5" r="5.3"/><circle cx="109.7" cy="58.6" r="5.3"/><circle cx="122.0" cy="48.7" r="5.3"/><circle cx="94.9" cy="90.6" r="5.3"/><circle cx="107.2" cy="80.7" r="5.3"/><circle cx="119.5" cy="70.8" r="5.3"/><circle cx="131.8" cy="60.8" r="5.3"/><circle cx="129.3" cy="82.9" r="5.3"/></g><defs><radialGradient id="vg20" cx="55%" cy="50%" r="62%"><stop offset="0.8" stop-color="#000" stop-opacity="0"/><stop offset="1" stop-color="#000" stop-opacity="0.6"/></radialGradient></defs><rect width="126" height="83" fill="url(#vg20)"/></svg></div>
<div style="left:1155px;top:708px;width:22px;height:11px;background:rgba(60,60,60,0.62);"></div>
<div class="t" style="left:1155px;top:707px;width:22px;text-align:center;font-size:10.5px;line-height:13px;color:#fff;font-weight:700;">CR2</div>
<div class="t" style="left:1063.00px;top:760.03px;width:200px;text-align:center;font-size:10.6px;line-height:10.6px;color:#e6e6e6;font-weight:400;font-style:normal;">TEST_0020.CR2</div>
<div class="t" style="left:1066.00px;top:771.53px;width:200px;text-align:center;font-size:10.6px;line-height:10.6px;color:#e6e6e6;font-weight:400;font-style:normal;">Lights</div>
<div class="t" style="left:1066.00px;top:783.26px;width:200px;text-align:center;font-size:9.5px;line-height:9.5px;color:#e6e6e6;font-weight:400;font-style:italic;">DUPLICATOR for slides</div>
<div class="t" style="left:1066.00px;top:793.61px;width:200px;text-align:center;font-size:7.9px;line-height:7.9px;color:#dcdcdc;font-weight:400;font-style:normal;">3/16/2019 11:12 AM</div>
<div class="t" style="left:1066.00px;top:802.61px;width:200px;text-align:center;font-size:7.9px;line-height:7.9px;color:#dcdcdc;font-weight:400;font-style:normal;">Mod.: 3/16/2019 11:13 AM</div>
<div style="left:1248px;top:606px;width:144px;height:222px;border:1px solid #4f4f4f;"></div>
<div style="left:1256px;top:635px;width:128px;height:85px;background:#000;box-shadow:0 0 3px 1px rgba(0,0,0,0.45);overflow:hidden;"><div style="left:1px;top:1px;width:126px;height:83px;background:radial-gradient(ellipse at 50% 50%, #837771 0%, #796c65 85%);"></div></div>
<div style="left:1309px;top:708px;width:22px;height:11px;background:rgba(60,60,60,0.62);"></div>
<div class="t" style="left:1309px;top:707px;width:22px;text-align:center;font-size:10.5px;line-height:13px;color:#fff;font-weight:700;">CR2</div>
<div class="t" style="left:1217.00px;top:760.03px;width:200px;text-align:center;font-size:10.6px;line-height:10.6px;color:#e6e6e6;font-weight:400;font-style:normal;">TEST_0021.CR2</div>
<div class="t" style="left:1220.00px;top:771.53px;width:200px;text-align:center;font-size:10.6px;line-height:10.6px;color:#e6e6e6;font-weight:400;font-style:normal;">Diffuser EV 0</div>
<div class="t" style="left:1220.00px;top:783.26px;width:200px;text-align:center;font-size:9.5px;line-height:9.5px;color:#e6e6e6;font-weight:400;font-style:italic;">DUPLICATOR for slides</div>
<div class="t" style="left:1220.00px;top:793.61px;width:200px;text-align:center;font-size:7.9px;line-height:7.9px;color:#dcdcdc;font-weight:400;font-style:normal;">3/16/2019 11:17 AM</div>
<div class="t" style="left:1220.00px;top:802.61px;width:200px;text-align:center;font-size:7.9px;line-height:7.9px;color:#dcdcdc;font-weight:400;font-style:normal;">Mod.: 3/16/2019 11:18 AM</div>
<div style="left:324px;top:838px;width:144px;height:222px;border:1px solid #4f4f4f;"></div>
<div style="left:332px;top:867px;width:128px;height:85px;background:#000;box-shadow:0 0 3px 1px rgba(0,0,0,0.45);overflow:hidden;"><div style="left:1px;top:1px;width:126px;height:83px;background:radial-gradient(ellipse at 50% 50%, #c0b3ae 0%, #bbada7 85%);"></div></div>
<div style="left:385px;top:940px;width:22px;height:11px;background:rgba(60,60,60,0.62);"></div>
<div class="t" style="left:385px;top:939px;width:22px;text-align:center;font-size:10.5px;line-height:13px;color:#fff;font-weight:700;">CR2</div>
<div class="t" style="left:293.00px;top:992.03px;width:200px;text-align:center;font-size:10.6px;line-height:10.6px;color:#e6e6e6;font-weight:400;font-style:normal;">TEST_0022.CR2</div>
<div class="t" style="left:296.00px;top:1003.53px;width:200px;text-align:center;font-size:10.6px;line-height:10.6px;color:#e6e6e6;font-weight:400;font-style:normal;">Diffuser EV +1</div>
<div class="t" style="left:296.00px;top:1015.26px;width:200px;text-align:center;font-size:9.5px;line-height:9.5px;color:#e6e6e6;font-weight:400;font-style:italic;">DUPLICATOR for slides</div>
<div class="t" style="left:296.00px;top:1025.61px;width:200px;text-align:center;font-size:7.9px;line-height:7.9px;color:#dcdcdc;font-weight:400;font-style:normal;">3/16/2019 11:18 AM</div>
<div class="t" style="left:296.00px;top:1034.61px;width:200px;text-align:center;font-size:7.9px;line-height:7.9px;color:#dcdcdc;font-weight:400;font-style:normal;">Mod.: 3/16/2019 11:18 AM</div>
<div style="left:478px;top:838px;width:144px;height:222px;border:1px solid #4f4f4f;"></div>
<div style="left:486px;top:867px;width:128px;height:85px;background:#000;box-shadow:0 0 3px 1px rgba(0,0,0,0.45);overflow:hidden;"><div style="left:1px;top:1px;width:126px;height:83px;background:radial-gradient(ellipse at 50% 50%, #dcd1cd 0%, #dacec9 85%);"></div></div>
<div style="left:539px;top:940px;width:22px;height:11px;background:rgba(60,60,60,0.62);"></div>
<div class="t" style="left:539px;top:939px;width:22px;text-align:center;font-size:10.5px;line-height:13px;color:#fff;font-weight:700;">CR2</div>
<div class="t" style="left:447.00px;top:992.03px;width:200px;text-align:center;font-size:10.6px;line-height:10.6px;color:#e6e6e6;font-weight:400;font-style:normal;">TEST_0023.CR2</div>
<div class="t" style="left:450.00px;top:1003.53px;width:200px;text-align:center;font-size:10.6px;line-height:10.6px;color:#e6e6e6;font-weight:400;font-style:normal;">Diffuser EV+2</div>
<div class="t" style="left:450.00px;top:1015.26px;width:200px;text-align:center;font-size:9.5px;line-height:9.5px;color:#e6e6e6;font-weight:400;font-style:italic;">DUPLICATOR for slides</div>
<div class="t" style="left:450.00px;top:1025.61px;width:200px;text-align:center;font-size:7.9px;line-height:7.9px;color:#dcdcdc;font-weight:400;font-style:normal;">3/16/2019 11:19 AM</div>
<div class="t" style="left:450.00px;top:1034.61px;width:200px;text-align:center;font-size:7.9px;line-height:7.9px;color:#dcdcdc;font-weight:400;font-style:normal;">Mod.: 3/16/2019 11:19 AM</div>
<div style="left:632px;top:838px;width:144px;height:222px;border:1px solid #4f4f4f;"></div>
<div style="left:640px;top:867px;width:128px;height:85px;background:#000;box-shadow:0 0 3px 1px rgba(0,0,0,0.45);overflow:hidden;"><div style="left:1px;top:1px;width:126px;height:83px;background:radial-gradient(ellipse at 50% 50%, #efe9e8 0%, #eee8e7 85%);"></div></div>
<div style="left:693px;top:940px;width:22px;height:11px;background:rgba(60,60,60,0.62);"></div>
<div class="t" style="left:693px;top:939px;width:22px;text-align:center;font-size:10.5px;line-height:13px;color:#fff;font-weight:700;">CR2</div>
<svg style="left:664px;top:975px" width="14" height="15"><polygon points="6.80,0.90 8.86,5.07 13.46,5.74 10.13,8.98 10.91,13.56 6.80,11.40 2.69,13.56 3.47,8.98 0.14,5.74 4.74,5.07" fill="#808000" stroke="#ffffff" stroke-width="0.9" stroke-linejoin="round"/></svg>
<svg style="left:680px;top:975px" width="14" height="15"><polygon points="6.80,0.90 8.86,5.07 13.46,5.74 10.13,8.98 10.91,13.56 6.80,11.40 2.69,13.56 3.47,8.98 0.14,5.74 4.74,5.07" fill="#808000" stroke="#ffffff" stroke-width="0.9" stroke-linejoin="round"/></svg>
<svg style="left:696px;top:975px" width="14" height="15"><polygon points="6.80,0.90 8.86,5.07 13.46,5.74 10.13,8.98 10.91,13.56 6.80,11.40 2.69,13.56 3.47,8.98 0.14,5.74 4.74,5.07" fill="#808000" stroke="#ffffff" stroke-width="0.9" stroke-linejoin="round"/></svg>
<svg style="left:712px;top:975px" width="14" height="15"><polygon points="6.80,0.90 8.86,5.07 13.46,5.74 10.13,8.98 10.91,13.56 6.80,11.40 2.69,13.56 3.47,8.98 0.14,5.74 4.74,5.07" fill="#808000" stroke="#ffffff" stroke-width="0.9" stroke-linejoin="round"/></svg>
<svg style="left:728px;top:975px" width="14" height="15"><polygon points="6.80,0.90 8.86,5.07 13.46,5.74 10.13,8.98 10.91,13.56 6.80,11.40 2.69,13.56 3.47,8.98 0.14,5.74 4.74,5.07" fill="#808000" stroke="#ffffff" stroke-width="0.9" stroke-linejoin="round"/></svg>
<div class="t" style="left:601.00px;top:992.03px;width:200px;text-align:center;font-size:10.6px;line-height:10.6px;color:#e6e6e6;font-weight:400;font-style:normal;">TEST_0024.CR2</div>
<div class="t" style="left:604.00px;top:1003.53px;width:200px;text-align:center;font-size:10.6px;line-height:10.6px;color:#e6e6e6;font-weight:400;font-style:normal;">Diffuser EV +3</div>
<div class="t" style="left:604.00px;top:1015.26px;width:200px;text-align:center;font-size:9.5px;line-height:9.5px;color:#e6e6e6;font-weight:400;font-style:italic;">DUPLICATOR for slides</div>
<div class="t" style="left:604.00px;top:1025.61px;width:200px;text-align:center;font-size:7.9px;line-height:7.9px;color:#dcdcdc;font-weight:400;font-style:normal;">3/16/2019 11:20 AM</div>
<div class="t" style="left:604.00px;top:1034.61px;width:200px;text-align:center;font-size:7.9px;line-height:7.9px;color:#dcdcdc;font-weight:400;font-style:normal;">Mod.: 3/16/2019 11:20 AM</div>
<div style="left:786px;top:838px;width:144px;height:222px;border:1px solid #4f4f4f;"></div>
<div style="left:794px;top:867px;width:128px;height:85px;background:#000;box-shadow:0 0 3px 1px rgba(0,0,0,0.45);overflow:hidden;"><div style="left:1px;top:1px;width:126px;height:83px;background:radial-gradient(ellipse at 50% 50%, #ffffff 0%, #ffffff 85%);"></div></div>
<div style="left:847px;top:940px;width:22px;height:11px;background:rgba(60,60,60,0.62);"></div>
<div class="t" style="left:847px;top:939px;width:22px;text-align:center;font-size:10.5px;line-height:13px;color:#fff;font-weight:700;">CR2</div>
<div class="t" style="left:755.00px;top:992.03px;width:200px;text-align:center;font-size:10.6px;line-height:10.6px;color:#e6e6e6;font-weight:400;font-style:normal;">TEST_0025.CR2</div>
<div class="t" style="left:758.00px;top:1003.53px;width:200px;text-align:center;font-size:10.6px;line-height:10.6px;color:#e6e6e6;font-weight:400;font-style:normal;">Diffuser EV +5</div>
<div class="t" style="left:758.00px;top:1015.26px;width:200px;text-align:center;font-size:9.5px;line-height:9.5px;color:#e6e6e6;font-weight:400;font-style:italic;">DUPLICATOR for slides</div>
<div class="t" style="left:758.00px;top:1025.61px;width:200px;text-align:center;font-size:7.9px;line-height:7.9px;color:#dcdcdc;font-weight:400;font-style:normal;">3/16/2019 11:21 AM</div>
<div class="t" style="left:758.00px;top:1034.61px;width:200px;text-align:center;font-size:7.9px;line-height:7.9px;color:#dcdcdc;font-weight:400;font-style:normal;">Mod.: 3/16/2019 11:21 AM</div>
<div style="left:940px;top:838px;width:144px;height:222px;border:1px solid #4f4f4f;"></div>
<div style="left:948px;top:867px;width:128px;height:85px;background:#000;box-shadow:0 0 3px 1px rgba(0,0,0,0.45);overflow:hidden;"><div style="left:1px;top:1px;width:126px;height:83px;background:radial-gradient(ellipse at 50% 50%, #ffffff 0%, #ffffff 85%);"></div></div>
<div style="left:1001px;top:940px;width:22px;height:11px;background:rgba(60,60,60,0.62);"></div>
<div class="t" style="left:1001px;top:939px;width:22px;text-align:center;font-size:10.5px;line-height:13px;color:#fff;font-weight:700;">CR2</div>
<div class="t" style="left:909.00px;top:992.03px;width:200px;text-align:center;font-size:10.6px;line-height:10.6px;color:#e6e6e6;font-weight:400;font-style:normal;">TEST_0026.CR2</div>
<div class="t" style="left:912.00px;top:1003.53px;width:200px;text-align:center;font-size:10.6px;line-height:10.6px;color:#e6e6e6;font-weight:400;font-style:normal;">Diffuser EV +4</div>
<div class="t" style="left:912.00px;top:1015.26px;width:200px;text-align:center;font-size:9.5px;line-height:9.5px;color:#e6e6e6;font-weight:400;font-style:italic;">DUPLICATOR for slides</div>
<div class="t" style="left:912.00px;top:1025.61px;width:200px;text-align:center;font-size:7.9px;line-height:7.9px;color:#dcdcdc;font-weight:400;font-style:normal;">3/16/2019 11:59 AM</div>
<div class="t" style="left:912.00px;top:1034.61px;width:200px;text-align:center;font-size:7.9px;line-height:7.9px;color:#dcdcdc;font-weight:400;font-style:normal;">Mod.: 3/16/2019 11:59 AM</div>
<div style="left:1480px;top:91px;width:1px;height:980px;background:#383838;"></div>
<div style="left:1483px;top:574px;width:2px;height:2px;background:#8a8a8a;"></div>
<div style="left:1483px;top:577px;width:2px;height:2px;background:#8a8a8a;"></div>
<div style="left:1483px;top:580px;width:2px;height:2px;background:#8a8a8a;"></div>
<div style="left:1483px;top:583px;width:2px;height:2px;background:#8a8a8a;"></div>
<div style="left:1483px;top:586px;width:2px;height:2px;background:#8a8a8a;"></div>
<div style="left:1483px;top:589px;width:2px;height:2px;background:#8a8a8a;"></div>
<div style="left:1485px;top:91px;width:290px;height:980px;background:#454545;"></div>
<div style="left:1486px;top:92px;width:77px;height:24px;background:#4d4d4d;border:1px solid #5a5a5a;border-bottom:none;border-radius:3px 3px 0 0;"></div>
<div style="left:1563px;top:94px;width:47px;height:22px;background:#464646;border:1px solid #585858;border-bottom:none;border-radius:3px 3px 0 0;"></div>
<div style="left:1610px;top:94px;width:78px;height:22px;background:#464646;border:1px solid #585858;border-bottom:none;border-radius:3px 3px 0 0;"></div>
<div class="t" style="left:1496.00px;top:98.86px;font-size:10.8px;line-height:10.8px;color:#e6e6e6;font-weight:400;font-style:normal;"><span class="u">D</span>escription</div>
<div class="t" style="left:1574.00px;top:100.86px;font-size:10.8px;line-height:10.8px;color:#e6e6e6;font-weight:400;font-style:normal;">Tags</div>
<div class="t" style="left:1620.00px;top:100.86px;font-size:10.8px;line-height:10.8px;color:#e6e6e6;font-weight:400;font-style:normal;">I<span class="u">n</span>formation</div>
<div style="left:1486px;top:115px;width:288px;height:893px;background:#454545;border:1px solid #585858;border-top:1px solid #5a5a5a;"></div>
<div style="left:1487px;top:116px;width:286px;height:2px;background:#4a4a4a;"></div>
<div class="t" style="left:1493.00px;top:128.86px;font-size:10.8px;line-height:10.8px;color:#e6e6e6;font-weight:400;font-style:normal;">Title:</div>
<div style="left:1645px;top:123px;width:91px;height:22px;background:linear-gradient(#5b5b5b,#4d4d4d);border:1px solid #6a6a6a;border-radius:3px;box-shadow:0 0 0 1px #363636;"></div>
<svg style="left:1653px;top:128px" width="14" height="12"><path d="M1 6 L5 10 L13 1" fill="none" stroke="#5c5c5c" stroke-width="1.4"/></svg>
<div class="t" style="left:1668.00px;top:129.86px;font-size:10.8px;line-height:10.8px;color:#e6e6e6;font-weight:400;font-style:normal;">x-default</div>
<svg style="left:1721px;top:132px" width="9" height="6"><path d="M0 0.5 L8.5 0.5 L4.25 5 Z" fill="#cfcfcf"/></svg>
<div style="left:1744px;top:123px;width:22px;height:22px;background:linear-gradient(#5b5b5b,#4d4d4d);border:1px solid #6a6a6a;border-radius:3px;box-shadow:0 0 0 1px #363636;"></div>
<svg style="left:1747px;top:128px" width="16" height="12"><path d="M5 0.5 H15.5 V11.5 H5 L0.5 6 Z" fill="#5a5a5a"/><path d="M8 3.5 L12.5 8.5 M12.5 3.5 L8 8.5" stroke="#4f4f4f" stroke-width="1.2"/></svg>
<div style="left:1493px;top:152px;width:274px;height:192px;background:#2e2e2e;"></div>
<div class="t" style="left:1497.00px;top:158.36px;font-size:10.8px;line-height:10.8px;color:#8c8c8c;font-weight:400;font-style:normal;">Diffuser</div>
<div class="t" style="left:1493.00px;top:357.86px;font-size:10.8px;line-height:10.8px;color:#e6e6e6;font-weight:400;font-style:normal;">Captions:</div>
<div style="left:1645px;top:351px;width:91px;height:22px;background:linear-gradient(#5b5b5b,#4d4d4d);border:1px solid #6a6a6a;border-radius:3px;box-shadow:0 0 0 1px #363636;"></div>
<svg style="left:1653px;top:356px" width="14" height="12"><path d="M1 6 L5 10 L13 1" fill="none" stroke="#5c5c5c" stroke-width="1.4"/></svg>
<div class="t" style="left:1668.00px;top:357.86px;font-size:10.8px;line-height:10.8px;color:#e6e6e6;font-weight:400;font-style:normal;">x-default</div>
<svg style="left:1721px;top:360px" width="9" height="6"><path d="M0 0.5 L8.5 0.5 L4.25 5 Z" fill="#cfcfcf"/></svg>
<div style="left:1744px;top:351px;width:22px;height:22px;background:linear-gradient(#5b5b5b,#4d4d4d);border:1px solid #6a6a6a;border-radius:3px;box-shadow:0 0 0 1px #363636;"></div>
<svg style="left:1747px;top:356px" width="16" height="12"><path d="M5 0.5 H15.5 V11.5 H5 L0.5 6 Z" fill="#5a5a5a"/><path d="M8 3.5 L12.5 8.5 M12.5 3.5 L8 8.5" stroke="#4f4f4f" stroke-width="1.2"/></svg>
<div style="left:1493px;top:380px;width:274px;height:489px;background:#2e2e2e;"></div>
<div class="t" style="left:1497.00px;top:386.86px;font-size:10.8px;line-height:10.8px;color:#e6e6e6;font-weight:400;font-style:normal;">DUPLICATOR for slides</div>
<div class="t" style="left:1497.00px;top:399.86px;font-size:10.8px;line-height:10.8px;color:#e6e6e6;font-weight:400;font-style:normal;">Originally for film cameras using T-mount</div>
<div class="t" style="left:1497.00px;top:412.86px;font-size:10.8px;line-height:10.8px;color:#e6e6e6;font-weight:400;font-style:normal;">Adapter for Canon EOS cameras</div>
<div class="t" style="left:1497.00px;top:438.86px;font-size:10.8px;line-height:10.8px;color:#e6e6e6;font-weight:400;font-style:normal;">Light Source is GOGOX LED64</div>
<div class="t" style="left:1497.00px;top:451.86px;font-size:10.8px;line-height:10.8px;color:#e6e6e6;font-weight:400;font-style:normal;">5500-6500K, &gt;1000 Lux (0.5 M)</div>
<div class="t" style="left:1497.00px;top:477.86px;font-size:10.8px;line-height:10.8px;color:#e6e6e6;font-weight:400;font-style:normal;">Extenson 3.8 inches</div>
<div class="t" style="left:1497.00px;top:503.86px;font-size:10.8px;line-height:10.8px;color:#e6e6e6;font-weight:400;font-style:normal;">Live view not turned on</div>
<div style="left:1493px;top:871px;width:274px;height:21px;background:#2e2e2e;border-radius:3px;"></div>
<div class="t" style="left:1495.00px;top:876.86px;font-size:10.8px;line-height:10.8px;color:#9a9a9a;font-weight:400;font-style:normal;">Enter caption author name here.</div>
<div class="t" style="left:1492.00px;top:905.06px;font-size:10.8px;line-height:10.8px;color:#e6e6e6;font-weight:400;font-style:normal;">Date:</div>
<div style="left:1613px;top:899px;width:78px;height:21px;background:#2e2e2e;border-radius:3px;"></div>
<div class="t" style="left:1617.00px;top:904.86px;font-size:10.8px;line-height:10.8px;color:#a8a8a8;font-weight:400;font-style:normal;">3/16/2019</div>
<div style="left:1672px;top:899px;width:19px;height:21px;background:#555555;border-radius:0 3px 3px 0;"></div>
<svg style="left:1677px;top:907px" width="9" height="6"><path d="M0 0.5 L8.5 0.5 L4.25 5 Z" fill="#cfcfcf"/></svg>
<div style="left:1692px;top:899px;width:75px;height:21px;background:#2e2e2e;border-radius:3px;"></div>
<div class="t" style="left:1698.00px;top:904.86px;font-size:10.8px;line-height:10.8px;color:#a8a8a8;font-weight:400;font-style:normal;">11:01:48</div>
<div style="left:1753px;top:899px;width:14px;height:21px;background:#555555;border-radius:0 3px 3px 0;"></div>
<svg style="left:1755px;top:902px" width="10" height="16"><path d="M1 5.5 L9 5.5 L5 1 Z M1 10 L9 10 L5 14.5 Z" fill="#cfcfcf"/></svg>
<div class="t" style="left:1492.00px;top:935.36px;font-size:10.8px;line-height:10.8px;color:#e6e6e6;font-weight:400;font-style:normal;">Pick Label:</div>
<div style="left:1728px;top:928px;width:39px;height:22px;background:linear-gradient(#5b5b5b,#4d4d4d);border:1px solid #6a6a6a;border-radius:3px;box-shadow:0 0 0 1px #363636;"></div>
<svg style="left:1741px;top:932px" width="12" height="12"><path d="M0.8 1 V11" stroke="#3a3a3a"/><path d="M1.3 1 L6 1.2 L10.5 3 L6 5 L1.3 5.5 Z" fill="#dc3a52"/></svg>
<svg style="left:1755px;top:937px" width="8" height="5"><path d="M0 0.5 L7 0.5 L3.5 4.5 Z" fill="#cfcfcf"/></svg>
<div class="t" style="left:1492.00px;top:964.86px;font-size:10.8px;line-height:10.8px;color:#e6e6e6;font-weight:400;font-style:normal;">Color Label:</div>
<div style="left:1728px;top:958px;width:39px;height:22px;background:linear-gradient(#5b5b5b,#4d4d4d);border:1px solid #6a6a6a;border-radius:3px;box-shadow:0 0 0 1px #363636;"></div>
<div style="left:1741px;top:963px;width:12px;height:12px;background:#e06a5c;border:1px solid #f2f2f2;"></div>
<svg style="left:1755px;top:967px" width="8" height="5"><path d="M0 0.5 L7 0.5 L3.5 4.5 Z" fill="#cfcfcf"/></svg>
<div class="t" style="left:1492.00px;top:989.86px;font-size:10.8px;line-height:10.8px;color:#e6e6e6;font-weight:400;font-style:normal;">Rating:</div>
<svg style="left:1686px;top:986px" width="15" height="15"><polygon points="7.50,0.60 9.38,5.21 14.35,5.58 10.54,8.79 11.73,13.62 7.50,11.00 3.27,13.62 4.46,8.79 0.65,5.58 5.62,5.21" fill="none" stroke="#e8e8e8" stroke-width="1"/></svg>
<svg style="left:1702px;top:986px" width="15" height="15"><polygon points="7.50,0.60 9.38,5.21 14.35,5.58 10.54,8.79 11.73,13.62 7.50,11.00 3.27,13.62 4.46,8.79 0.65,5.58 5.62,5.21" fill="none" stroke="#e8e8e8" stroke-width="1"/></svg>
<svg style="left:1718px;top:986px" width="15" height="15"><polygon points="7.50,0.60 9.38,5.21 14.35,5.58 10.54,8.79 11.73,13.62 7.50,11.00 3.27,13.62 4.46,8.79 0.65,5.58 5.62,5.21" fill="none" stroke="#e8e8e8" stroke-width="1"/></svg>
<svg style="left:1734px;top:986px" width="15" height="15"><polygon points="7.50,0.60 9.38,5.21 14.35,5.58 10.54,8.79 11.73,13.62 7.50,11.00 3.27,13.62 4.46,8.79 0.65,5.58 5.62,5.21" fill="none" stroke="#e8e8e8" stroke-width="1"/></svg>
<svg style="left:1750px;top:986px" width="15" height="15"><polygon points="7.50,0.60 9.38,5.21 14.35,5.58 10.54,8.79 11.73,13.62 7.50,11.00 3.27,13.62 4.46,8.79 0.65,5.58 5.62,5.21" fill="none" stroke="#e8e8e8" stroke-width="1"/></svg>
<div style="left:1486px;top:1017px;width:288px;height:22px;background:linear-gradient(#5b5b5b,#4d4d4d);border:1px solid #6a6a6a;border-radius:3px;box-shadow:0 0 0 1px #363636;"></div>
<svg style="left:1610px;top:1022px" width="12" height="11"><path d="M1 6 L4.5 9.5 L11 1" fill="none" stroke="#666" stroke-width="1.3"/></svg>
<div class="t" style="left:1624.00px;top:1023.86px;font-size:10.8px;line-height:10.8px;color:#8f8f8f;font-weight:400;font-style:normal;">A<span class="u">p</span>ply</div>
<div style="left:1486px;top:1047px;width:22px;height:21px;background:linear-gradient(#5b5b5b,#4d4d4d);border:1px solid #6a6a6a;border-radius:3px;box-shadow:0 0 0 1px #363636;"></div>
<svg style="left:1491px;top:1051px" width="14" height="13"><path d="M1 1 H9 V7 L6 12 H1 Z M9 6 L12 6" fill="none" stroke="#666" stroke-width="1"/></svg>
<div style="left:1516px;top:1048px;width:125px;height:21px;background:linear-gradient(#5b5b5b,#4d4d4d);border:1px solid #6a6a6a;border-radius:3px;box-shadow:0 0 0 1px #363636;"></div>
<svg style="left:1522px;top:1053px" width="12" height="11"><path d="M1 6 L4.5 9.5 L11 1" fill="none" stroke="#666" stroke-width="1.3"/></svg>
<div class="t" style="left:1537.00px;top:1053.86px;font-size:10.8px;line-height:10.8px;color:#8f8f8f;font-weight:400;font-style:normal;">Apply to all versions</div>
<div style="left:1649px;top:1048px;width:125px;height:20px;background:linear-gradient(#5b5b5b,#4d4d4d);border:1px solid #6a6a6a;border-radius:3px;box-shadow:0 0 0 1px #363636;"></div>
<div class="t" style="left:1693.00px;top:1052.86px;font-size:10.8px;line-height:10.8px;color:#8f8f8f;font-weight:400;font-style:normal;">M<span class="u">o</span>re</div>
<svg style="left:1762px;top:1055px" width="9" height="6"><path d="M0 0.5 L8.5 0.5 L4.25 5 Z" fill="#cfcfcf"/></svg>
<div style="left:1558px;top:1038px;width:156px;height:21px;background:#ffffe1;border:1px solid #000;"></div>
<div class="t" style="left:1562.00px;top:1043.01px;font-size:11.8px;line-height:11.8px;color:#000000;font-weight:400;font-style:normal;">Apply all changes to images</div>
<div style="left:1774px;top:91px;width:1px;height:980px;background:#3a3a3a;"></div>
<div style="left:1775px;top:91px;width:24px;height:980px;background:#444444;"></div>
<div style="left:1776px;top:336px;width:22px;height:66px;background:#4b4b4b;border:1px solid #5a5a5a;border-radius:3px;"></div>
<div class="t" style="left:1726px;top:129px;width:120px;height:16px;line-height:16px;text-align:center;font-size:10.8px;color:#e6e6e6;transform:rotate(90deg);">Properties</div>
<div class="t" style="left:1726px;top:201px;width:120px;height:16px;line-height:16px;text-align:center;font-size:10.8px;color:#e6e6e6;transform:rotate(90deg);">Metadata</div>
<div class="t" style="left:1726px;top:264px;width:120px;height:16px;line-height:16px;text-align:center;font-size:10.8px;color:#e6e6e6;transform:rotate(90deg);">Colors</div>
<div class="t" style="left:1726px;top:314px;width:120px;height:16px;line-height:16px;text-align:center;font-size:10.8px;color:#e6e6e6;transform:rotate(90deg);">Map</div>
<div class="t" style="left:1726px;top:370px;width:120px;height:16px;line-height:16px;text-align:center;font-size:10.8px;color:#e6e6e6;transform:rotate(90deg);">Captions</div>
<div class="t" style="left:1726px;top:436px;width:120px;height:16px;line-height:16px;text-align:center;font-size:10.8px;color:#e6e6e6;transform:rotate(90deg);">Versions</div>
<div class="t" style="left:1726px;top:495px;width:120px;height:16px;line-height:16px;text-align:center;font-size:10.8px;color:#e6e6e6;transform:rotate(90deg);">Filters</div>
<div class="t" style="left:1726px;top:548px;width:120px;height:16px;line-height:16px;text-align:center;font-size:10.8px;color:#e6e6e6;transform:rotate(90deg);">Tools</div>
<svg style="left:1779px;top:94px" width="15" height="15"><path d="M1 4 H14 M1 11 H14" stroke="#535353" stroke-width="1"/><rect x="8" y="2" width="2.5" height="4" fill="#535353"/><rect x="3" y="9" width="2.5" height="4" fill="#535353"/></svg>
<svg style="left:1779px;top:168px" width="15" height="15"><path d="M5 3 L1 7.5 L5 12 M10 3 L14 7.5 L10 12 M9 2 L6 13" fill="none" stroke="#535353" stroke-width="1.2"/></svg>
<svg style="left:1779px;top:239px" width="15" height="15"><path d="M2 7 L7 2 L12 7 L7 12 Z" fill="#535353"/><circle cx="13" cy="11" r="1.8" fill="#535353"/></svg>
<svg style="left:1779px;top:294px" width="15" height="15"><circle cx="7.5" cy="7.5" r="6.5" fill="#535353"/></svg>
<svg style="left:1780px;top:340px" width="14" height="14"><rect x="1.5" y="0.5" width="11" height="13" fill="none" stroke="#535353"/><path d="M4 4 H10 M4 7 H10 M4 10 H8" stroke="#535353"/></svg>
<svg style="left:1779px;top:405px" width="15" height="15"><rect x="0.5" y="0.5" width="9" height="11" fill="none" stroke="#535353"/><rect x="5.5" y="4.5" width="9" height="10" fill="#535353"/></svg>
<svg style="left:1779px;top:470px" width="15" height="15"><path d="M0.5 1 H14.5 L9 8 V14 L6 12 V8 Z" fill="none" stroke="#535353"/></svg>
<svg style="left:1779px;top:527px" width="15" height="15"><path d="M2 13 L3 9 L10 2 L13 5 L6 12 Z" fill="#535353"/></svg>
<svg style="left:1781px;top:340px" width="6" height="4"><path d="M0 0 L5 0 L2.5 3.5 Z" fill="#3daee9"/></svg>
<div class="t" style="left:770.00px;top:1079.06px;width:200px;text-align:center;font-size:12.1px;line-height:12.1px;color:#e6e6e6;font-weight:400;font-style:normal;">No active filter</div>
<div class="t" style="left:1320.00px;top:1079.06px;width:200px;text-align:center;font-size:12.1px;line-height:12.1px;color:#e6e6e6;font-weight:400;font-style:normal;">No active process</div>
<svg style="left:1296px;top:1077px" width="11" height="13"><path d="M1 2.5 H10 M4 2.5 V1 H7 V2.5 M2 3 L2.8 12 H8.2 L9 3" fill="none" stroke="#777" stroke-width="1"/></svg>
<svg style="left:1326px;top:1078px" width="12" height="12"><path d="M0.5 1 H11.5 L7 6 V11 L5 10 V6 Z" fill="none" stroke="#555" stroke-width="1"/></svg>
<svg style="left:1500px;top:1077px" width="14" height="14"><path d="M1.5 4 V1.5 H4 M10 1.5 H12.5 V4 M12.5 10 V12.5 H10 M4 12.5 H1.5 V10" fill="none" stroke="#505050" stroke-width="1"/><rect x="4.5" y="4.5" width="5" height="5" fill="none" stroke="#505050"/></svg>
<svg style="left:1524px;top:1077px" width="14" height="14"><path d="M1.5 4 V1.5 H4 M10 1.5 H12.5 V4 M12.5 10 V12.5 H10 M4 12.5 H1.5 V10" fill="none" stroke="#8e8e8e" stroke-width="1"/><rect x="3.5" y="3.5" width="7" height="7" fill="none" stroke="#8e8e8e"/></svg>
<svg style="left:1548px;top:1077px" width="14" height="14"><path d="M1.5 8 V1.5 H12.5 V12.5 H6" fill="none" stroke="#8e8e8e" stroke-width="1"/><rect x="1.5" y="9.5" width="3" height="3" fill="none" stroke="#8e8e8e"/><path d="M10.5 3.5 L6 8 M6 5 V8 H9" fill="none" stroke="#8e8e8e"/></svg>
<div style="left:1580px;top:1082px;width:106px;height:5px;background:#4a4a4a;border:1px solid #363636;border-radius:2px;"></div>
<div style="left:1569px;top:1079px;width:11px;height:11px;background:linear-gradient(#5c5c5c,#4e4e4e);border:1px solid #6a6a6a;border-radius:3px;box-shadow:0 0 0 1px #333;"></div>
<svg style="left:1693px;top:1077px" width="14" height="14"><path d="M1.5 4 V1.5 H4 M10 1.5 H12.5 V4 M12.5 10 V12.5 H10 M4 12.5 H1.5 V10 M5 9 L9 5" fill="none" stroke="#505050" stroke-width="1"/></svg>
<div style="left:1711px;top:1074px;width:64px;height:21px;background:#2e2e2e;border-radius:3px;"></div>
<div class="t" style="left:1715.00px;top:1079.27px;font-size:11.5px;line-height:11.5px;color:#b0b0b0;font-weight:400;font-style:normal;">10%</div>
<div style="left:1755px;top:1074px;width:19px;height:21px;background:#555;border-radius:0 3px 3px 0;"></div>
<svg style="left:1760px;top:1082px" width="9" height="6"><path d="M0 0.5 L8.5 0.5 L4.25 5 Z" fill="#cfcfcf"/></svg>
<div style="left:1794px;top:1093px;width:2px;height:2px;background:#6a6a6a;"></div>
<div style="left:1791px;top:1093px;width:2px;height:2px;background:#6a6a6a;"></div>
<div style="left:1788px;top:1093px;width:2px;height:2px;background:#6a6a6a;"></div>
<div style="left:1785px;top:1093px;width:2px;height:2px;background:#6a6a6a;"></div>
<div style="left:1794px;top:1090px;width:2px;height:2px;background:#6a6a6a;"></div>
<div style="left:1791px;top:1090px;width:2px;height:2px;background:#6a6a6a;"></div>
<div style="left:1788px;top:1090px;width:2px;height:2px;background:#6a6a6a;"></div>
<div style="left:1794px;top:1087px;width:2px;height:2px;background:#6a6a6a;"></div>
<div style="left:1791px;top:1087px;width:2px;height:2px;background:#6a6a6a;"></div>
<div style="left:1794px;top:1084px;width:2px;height:2px;background:#6a6a6a;"></div>
<div style="left:0;top:0;width:1800px;height:1099px;border:1px solid #1883d7;z-index:50;pointer-events:none;"></div>
</body></html>
